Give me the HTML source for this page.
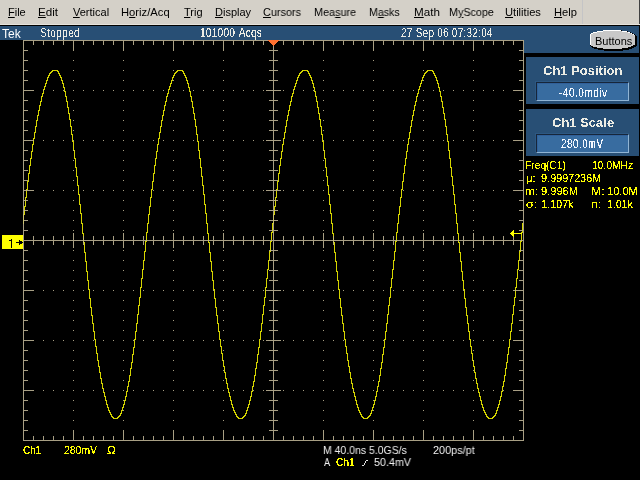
<!DOCTYPE html><html><head><meta charset="utf-8"><style>
html,body{margin:0;padding:0}
body{width:640px;height:480px;overflow:hidden;background:#000;position:relative;font-family:"Liberation Sans",sans-serif}
.a{position:absolute;white-space:nowrap}
.t{position:absolute;white-space:nowrap;line-height:20px;transform-origin:0 0;will-change:transform}
.f{filter:url(#th)}
.f2{filter:url(#th2)}
.t u{text-decoration:underline;text-decoration-thickness:1px;text-underline-offset:1px}
</style></head><body>
<svg width="0" height="0" style="position:absolute"><defs><filter id="th" x="-5%" y="0" width="110%" height="100%"><feComponentTransfer><feFuncA type="discrete" tableValues="0 0 0 1 1 1 1"/></feComponentTransfer></filter><filter id="th2" x="-5%" y="0" width="110%" height="100%"><feComponentTransfer><feFuncA type="discrete" tableValues="0 1"/></feComponentTransfer></filter></defs></svg>
<div class="a" style="left:0;top:0;width:640px;height:24px;background:#d4d0c8"></div>
<div class="a" style="left:582px;top:0;width:1px;height:24px;background:#c4c4c6"></div>
<div class="a" style="left:0;top:24px;width:640px;height:1px;background:#e6e3dc"></div>
<div class="a" style="left:0;top:25px;width:640px;height:1px;background:#000"></div>
<div class="a" style="left:639px;top:0;width:1px;height:24px;background:#404040"></div>
<div class="t" style="left:8.0px;top:2px;color:#000;font-size:11px;"><u>F</u>ile</div>
<div class="t" style="left:37.94px;top:2px;color:#000;font-size:11px;transform:scale(1.0588,1);"><u>E</u>dit</div>
<div class="t" style="left:72.5px;top:2px;color:#000;font-size:11px;"><u>V</u>ertical</div>
<div class="t" style="left:121.48px;top:2px;color:#000;font-size:11px;transform:scale(1.02,1);">H<u>o</u>riz/Acq</div>
<div class="t" style="left:184.0px;top:2px;color:#000;font-size:11px;"><u>T</u>rig</div>
<div class="t" style="left:215.0px;top:2px;color:#000;font-size:11px;"><u>D</u>isplay</div>
<div class="t" style="left:262.5px;top:2px;color:#000;font-size:11px;transform:scale(0.9865,1);"><u>C</u>ursors</div>
<div class="t" style="left:313.72px;top:2px;color:#000;font-size:11px;transform:scale(0.9829,1);">Mea<u>s</u>ure</div>
<div class="t" style="left:369.03px;top:2px;color:#000;font-size:11px;transform:scale(0.9667,1);">M<u>a</u>sks</div>
<div class="t" style="left:413.64px;top:2px;color:#000;font-size:11px;transform:scale(1.0591,1);"><u>M</u>ath</div>
<div class="t" style="left:449.02px;top:2px;color:#000;font-size:11px;transform:scale(0.9773,1);">M<u>y</u>Scope</div>
<div class="t" style="left:504.59px;top:2px;color:#000;font-size:11px;transform:scale(1.0121,1);"><u>U</u>tilities</div>
<div class="t" style="left:553.69px;top:2px;color:#000;font-size:11px;transform:scale(1.015,1);"><u>H</u>elp</div>
<div class="a" style="left:0;top:26px;width:639px;height:14px;background:#284f75"></div>
<div class="a" style="left:524px;top:40px;width:115px;height:13px;background:#284f75"></div>
<div class="t" style="left:2.0px;top:24px;color:#ffffff;font-size:12px;">Tek</div>
<div class="t f2" style="left:40.0px;top:21px;color:#ecece4;font-size:10px;letter-spacing:0.4px;word-spacing:2px;transform:scale(1.0,1.25);">Stopped</div>
<div class="t f" style="left:199.99px;top:21px;color:#ecece4;font-size:10px;letter-spacing:0.25px;word-spacing:1px;transform:scale(1.0085,1.25);">101000 Acqs</div>
<div class="t f2" style="left:401.0px;top:21px;color:#ecece4;font-size:10px;letter-spacing:0.25px;word-spacing:0px;transform:scale(0.9967,1.25);">27 Sep 06 07:32:04</div>
<svg class="a" style="left:0;top:0" width="640" height="60" shape-rendering="crispEdges"><g fill="#000"><rect x="603" y="30" width="19" height="1"/><rect x="597" y="31" width="31" height="1"/><rect x="593" y="32" width="38" height="1"/><rect x="591" y="33" width="42" height="1"/><rect x="590" y="34" width="45" height="1"/><rect x="590" y="35" width="46" height="1"/><rect x="590" y="36" width="47" height="1"/><rect x="590" y="37" width="47" height="1"/><rect x="590" y="38" width="47" height="1"/><rect x="590" y="39" width="47" height="1"/><rect x="590" y="40" width="47" height="1"/><rect x="590" y="41" width="47" height="1"/><rect x="590" y="42" width="47" height="1"/><rect x="590" y="43" width="47" height="1"/><rect x="590" y="44" width="47" height="1"/><rect x="590" y="45" width="47" height="1"/><rect x="591" y="46" width="45" height="1"/><rect x="592" y="47" width="42" height="1"/><rect x="594" y="48" width="38" height="1"/><rect x="598" y="49" width="31" height="1"/><rect x="604" y="50" width="19" height="1"/></g><g fill="#fff"><rect x="603" y="30" width="18" height="1"/><rect x="597" y="31" width="30" height="1"/><rect x="593" y="32" width="37" height="1"/><rect x="591" y="33" width="41" height="1"/><rect x="590" y="34" width="44" height="1"/><rect x="590" y="35" width="45" height="1"/><rect x="590" y="36" width="45" height="1"/><rect x="590" y="37" width="45" height="1"/><rect x="590" y="38" width="45" height="1"/><rect x="590" y="39" width="45" height="1"/><rect x="590" y="40" width="45" height="1"/><rect x="590" y="41" width="45" height="1"/><rect x="590" y="42" width="45" height="1"/><rect x="590" y="43" width="45" height="1"/><rect x="590" y="44" width="45" height="1"/><rect x="591" y="45" width="42" height="1"/><rect x="593" y="46" width="38" height="1"/><rect x="597" y="47" width="31" height="1"/><rect x="603" y="48" width="19" height="1"/></g><g fill="#c8c8c8"><rect x="603" y="31" width="19" height="1"/><rect x="597" y="32" width="31" height="1"/><rect x="593" y="33" width="38" height="1"/><rect x="591" y="34" width="42" height="1"/><rect x="591" y="35" width="44" height="1"/><rect x="591" y="36" width="44" height="1"/><rect x="591" y="37" width="44" height="1"/><rect x="591" y="38" width="44" height="1"/><rect x="591" y="39" width="44" height="1"/><rect x="591" y="40" width="44" height="1"/><rect x="591" y="41" width="44" height="1"/><rect x="591" y="42" width="44" height="1"/><rect x="591" y="43" width="44" height="1"/><rect x="591" y="44" width="44" height="1"/><rect x="591" y="45" width="42" height="1"/><rect x="593" y="46" width="38" height="1"/><rect x="597" y="47" width="31" height="1"/><rect x="603" y="48" width="19" height="1"/></g></svg>
<div class="t" style="left:594.7px;top:31px;color:#000;font-size:11px;">Buttons</div>
<div class="a" style="left:526px;top:57px;width:113px;height:47px;background:#284f75"></div>
<div class="a" style="left:535px;top:81px;width:94px;height:20px;background:#2d5883"></div>
<div class="a" style="left:536px;top:82px;width:93px;height:19px;background:#386ca0;box-sizing:border-box;border-left:1px solid #16263a;border-top:1px solid #16263a;border-right:1px solid #90b4d4;border-bottom:1px solid #90b4d4;box-shadow:inset 1px 1px 0 #30609a"></div>
<div class="t f2" style="left:542.9px;top:61px;color:#ecece4;font-size:13px;font-weight:bold;">Ch1 Position</div>
<div class="t f" style="left:559.0px;top:81px;color:#f4f8ff;font-size:10px;letter-spacing:0.5px;transform:scale(1.0043,1.2);">-40.0mdiv</div>
<div class="a" style="left:526px;top:109px;width:113px;height:47px;background:#284f75"></div>
<div class="a" style="left:535px;top:133px;width:94px;height:20px;background:#2d5883"></div>
<div class="a" style="left:536px;top:134px;width:93px;height:19px;background:#386ca0;box-sizing:border-box;border-left:1px solid #16263a;border-top:1px solid #16263a;border-right:1px solid #90b4d4;border-bottom:1px solid #90b4d4;box-shadow:inset 1px 1px 0 #30609a"></div>
<div class="t f2" style="left:551.5px;top:113px;color:#ecece4;font-size:13px;font-weight:bold;transform:scale(0.9967,1);">Ch1 Scale</div>
<div class="t f" style="left:561.3px;top:132px;color:#f4f8ff;font-size:10px;letter-spacing:0.5px;transform:scale(0.981,1.2);">280.0mV</div>
<div class="t f" style="left:525.17px;top:155px;color:#ffff00;font-size:11px;transform:scale(0.931,1);">Freq(C1)</div>
<div class="t f" style="left:591.87px;top:155px;color:#ffff00;font-size:11px;transform:scale(0.9333,1);">10.0MHz</div>
<div class="t f" style="left:525.76px;top:168px;color:#ffff00;font-size:11px;transform:scale(1.0429,1);">&mu;:</div>
<div class="t f" style="left:541.0px;top:168px;color:#ffff00;font-size:11px;transform:scale(0.9833,1);">9.9997236M</div>
<div class="t f" style="left:524.9px;top:181px;color:#ffff00;font-size:11px;transform:scale(1.1,1);">m:</div>
<div class="t f" style="left:541.0px;top:181px;color:#ffff00;font-size:11px;transform:scale(1.0086,1);">9.996M</div>
<div class="t f" style="left:590.99px;top:181px;color:#ffff00;font-size:11px;transform:scale(1.11,1);">M:</div>
<div class="t f" style="left:606.99px;top:181px;color:#ffff00;font-size:11px;transform:scale(1.0071,1);">10.0M</div>
<div class="t f" style="left:526.0px;top:194px;color:#ffff00;font-size:11px;transform:scale(1.125,1);">&sigma;:</div>
<div class="t f" style="left:540.82px;top:194px;color:#ffff00;font-size:11px;transform:scale(0.9806,1);">1.107k</div>
<div class="t f" style="left:590.78px;top:194px;color:#ffff00;font-size:11px;transform:scale(1.15,1);">n:</div>
<div class="t f" style="left:607.04px;top:194px;color:#ffff00;font-size:11px;transform:scale(0.96,1);">1.01k</div>
<svg class="a" style="left:0;top:0" width="640" height="480" shape-rendering="crispEdges"><rect x="23" y="40" width="501" height="1" fill="#a89f84"/><rect x="23" y="440" width="501" height="1" fill="#a89f84"/><rect x="23" y="40" width="1" height="401" fill="#a89f84"/><rect x="523" y="40" width="1" height="401" fill="#a89f84"/><rect x="23" y="240" width="500" height="1" fill="#a89f84"/><rect x="273" y="40" width="1" height="400" fill="#a89f84"/><rect x="33" y="41" width="1" height="4" fill="#a89f84"/><rect x="33" y="436" width="1" height="4" fill="#a89f84"/><rect x="43" y="41" width="1" height="4" fill="#a89f84"/><rect x="43" y="436" width="1" height="4" fill="#a89f84"/><rect x="53" y="41" width="1" height="4" fill="#a89f84"/><rect x="53" y="436" width="1" height="4" fill="#a89f84"/><rect x="63" y="41" width="1" height="4" fill="#a89f84"/><rect x="63" y="436" width="1" height="4" fill="#a89f84"/><rect x="73" y="41" width="1" height="10" fill="#a89f84"/><rect x="73" y="430" width="1" height="10" fill="#a89f84"/><rect x="83" y="41" width="1" height="4" fill="#a89f84"/><rect x="83" y="436" width="1" height="4" fill="#a89f84"/><rect x="93" y="41" width="1" height="4" fill="#a89f84"/><rect x="93" y="436" width="1" height="4" fill="#a89f84"/><rect x="103" y="41" width="1" height="4" fill="#a89f84"/><rect x="103" y="436" width="1" height="4" fill="#a89f84"/><rect x="113" y="41" width="1" height="4" fill="#a89f84"/><rect x="113" y="436" width="1" height="4" fill="#a89f84"/><rect x="123" y="41" width="1" height="10" fill="#a89f84"/><rect x="123" y="430" width="1" height="10" fill="#a89f84"/><rect x="133" y="41" width="1" height="4" fill="#a89f84"/><rect x="133" y="436" width="1" height="4" fill="#a89f84"/><rect x="143" y="41" width="1" height="4" fill="#a89f84"/><rect x="143" y="436" width="1" height="4" fill="#a89f84"/><rect x="153" y="41" width="1" height="4" fill="#a89f84"/><rect x="153" y="436" width="1" height="4" fill="#a89f84"/><rect x="163" y="41" width="1" height="4" fill="#a89f84"/><rect x="163" y="436" width="1" height="4" fill="#a89f84"/><rect x="173" y="41" width="1" height="10" fill="#a89f84"/><rect x="173" y="430" width="1" height="10" fill="#a89f84"/><rect x="183" y="41" width="1" height="4" fill="#a89f84"/><rect x="183" y="436" width="1" height="4" fill="#a89f84"/><rect x="193" y="41" width="1" height="4" fill="#a89f84"/><rect x="193" y="436" width="1" height="4" fill="#a89f84"/><rect x="203" y="41" width="1" height="4" fill="#a89f84"/><rect x="203" y="436" width="1" height="4" fill="#a89f84"/><rect x="213" y="41" width="1" height="4" fill="#a89f84"/><rect x="213" y="436" width="1" height="4" fill="#a89f84"/><rect x="223" y="41" width="1" height="10" fill="#a89f84"/><rect x="223" y="430" width="1" height="10" fill="#a89f84"/><rect x="233" y="41" width="1" height="4" fill="#a89f84"/><rect x="233" y="436" width="1" height="4" fill="#a89f84"/><rect x="243" y="41" width="1" height="4" fill="#a89f84"/><rect x="243" y="436" width="1" height="4" fill="#a89f84"/><rect x="253" y="41" width="1" height="4" fill="#a89f84"/><rect x="253" y="436" width="1" height="4" fill="#a89f84"/><rect x="263" y="41" width="1" height="4" fill="#a89f84"/><rect x="263" y="436" width="1" height="4" fill="#a89f84"/><rect x="273" y="41" width="1" height="10" fill="#a89f84"/><rect x="273" y="430" width="1" height="10" fill="#a89f84"/><rect x="283" y="41" width="1" height="4" fill="#a89f84"/><rect x="283" y="436" width="1" height="4" fill="#a89f84"/><rect x="293" y="41" width="1" height="4" fill="#a89f84"/><rect x="293" y="436" width="1" height="4" fill="#a89f84"/><rect x="303" y="41" width="1" height="4" fill="#a89f84"/><rect x="303" y="436" width="1" height="4" fill="#a89f84"/><rect x="313" y="41" width="1" height="4" fill="#a89f84"/><rect x="313" y="436" width="1" height="4" fill="#a89f84"/><rect x="323" y="41" width="1" height="10" fill="#a89f84"/><rect x="323" y="430" width="1" height="10" fill="#a89f84"/><rect x="333" y="41" width="1" height="4" fill="#a89f84"/><rect x="333" y="436" width="1" height="4" fill="#a89f84"/><rect x="343" y="41" width="1" height="4" fill="#a89f84"/><rect x="343" y="436" width="1" height="4" fill="#a89f84"/><rect x="353" y="41" width="1" height="4" fill="#a89f84"/><rect x="353" y="436" width="1" height="4" fill="#a89f84"/><rect x="363" y="41" width="1" height="4" fill="#a89f84"/><rect x="363" y="436" width="1" height="4" fill="#a89f84"/><rect x="373" y="41" width="1" height="10" fill="#a89f84"/><rect x="373" y="430" width="1" height="10" fill="#a89f84"/><rect x="383" y="41" width="1" height="4" fill="#a89f84"/><rect x="383" y="436" width="1" height="4" fill="#a89f84"/><rect x="393" y="41" width="1" height="4" fill="#a89f84"/><rect x="393" y="436" width="1" height="4" fill="#a89f84"/><rect x="403" y="41" width="1" height="4" fill="#a89f84"/><rect x="403" y="436" width="1" height="4" fill="#a89f84"/><rect x="413" y="41" width="1" height="4" fill="#a89f84"/><rect x="413" y="436" width="1" height="4" fill="#a89f84"/><rect x="423" y="41" width="1" height="10" fill="#a89f84"/><rect x="423" y="430" width="1" height="10" fill="#a89f84"/><rect x="433" y="41" width="1" height="4" fill="#a89f84"/><rect x="433" y="436" width="1" height="4" fill="#a89f84"/><rect x="443" y="41" width="1" height="4" fill="#a89f84"/><rect x="443" y="436" width="1" height="4" fill="#a89f84"/><rect x="453" y="41" width="1" height="4" fill="#a89f84"/><rect x="453" y="436" width="1" height="4" fill="#a89f84"/><rect x="463" y="41" width="1" height="4" fill="#a89f84"/><rect x="463" y="436" width="1" height="4" fill="#a89f84"/><rect x="473" y="41" width="1" height="10" fill="#a89f84"/><rect x="473" y="430" width="1" height="10" fill="#a89f84"/><rect x="483" y="41" width="1" height="4" fill="#a89f84"/><rect x="483" y="436" width="1" height="4" fill="#a89f84"/><rect x="493" y="41" width="1" height="4" fill="#a89f84"/><rect x="493" y="436" width="1" height="4" fill="#a89f84"/><rect x="503" y="41" width="1" height="4" fill="#a89f84"/><rect x="503" y="436" width="1" height="4" fill="#a89f84"/><rect x="513" y="41" width="1" height="4" fill="#a89f84"/><rect x="513" y="436" width="1" height="4" fill="#a89f84"/><rect x="24" y="50" width="4" height="1" fill="#a89f84"/><rect x="519" y="50" width="4" height="1" fill="#a89f84"/><rect x="24" y="60" width="4" height="1" fill="#a89f84"/><rect x="519" y="60" width="4" height="1" fill="#a89f84"/><rect x="24" y="70" width="4" height="1" fill="#a89f84"/><rect x="519" y="70" width="4" height="1" fill="#a89f84"/><rect x="24" y="80" width="4" height="1" fill="#a89f84"/><rect x="519" y="80" width="4" height="1" fill="#a89f84"/><rect x="24" y="90" width="10" height="1" fill="#a89f84"/><rect x="513" y="90" width="10" height="1" fill="#a89f84"/><rect x="24" y="100" width="4" height="1" fill="#a89f84"/><rect x="519" y="100" width="4" height="1" fill="#a89f84"/><rect x="24" y="110" width="4" height="1" fill="#a89f84"/><rect x="519" y="110" width="4" height="1" fill="#a89f84"/><rect x="24" y="120" width="4" height="1" fill="#a89f84"/><rect x="519" y="120" width="4" height="1" fill="#a89f84"/><rect x="24" y="130" width="4" height="1" fill="#a89f84"/><rect x="519" y="130" width="4" height="1" fill="#a89f84"/><rect x="24" y="140" width="10" height="1" fill="#a89f84"/><rect x="513" y="140" width="10" height="1" fill="#a89f84"/><rect x="24" y="150" width="4" height="1" fill="#a89f84"/><rect x="519" y="150" width="4" height="1" fill="#a89f84"/><rect x="24" y="160" width="4" height="1" fill="#a89f84"/><rect x="519" y="160" width="4" height="1" fill="#a89f84"/><rect x="24" y="170" width="4" height="1" fill="#a89f84"/><rect x="519" y="170" width="4" height="1" fill="#a89f84"/><rect x="24" y="180" width="4" height="1" fill="#a89f84"/><rect x="519" y="180" width="4" height="1" fill="#a89f84"/><rect x="24" y="190" width="10" height="1" fill="#a89f84"/><rect x="513" y="190" width="10" height="1" fill="#a89f84"/><rect x="24" y="200" width="4" height="1" fill="#a89f84"/><rect x="519" y="200" width="4" height="1" fill="#a89f84"/><rect x="24" y="210" width="4" height="1" fill="#a89f84"/><rect x="519" y="210" width="4" height="1" fill="#a89f84"/><rect x="24" y="220" width="4" height="1" fill="#a89f84"/><rect x="519" y="220" width="4" height="1" fill="#a89f84"/><rect x="24" y="230" width="4" height="1" fill="#a89f84"/><rect x="519" y="230" width="4" height="1" fill="#a89f84"/><rect x="24" y="240" width="10" height="1" fill="#a89f84"/><rect x="513" y="240" width="10" height="1" fill="#a89f84"/><rect x="24" y="250" width="4" height="1" fill="#a89f84"/><rect x="519" y="250" width="4" height="1" fill="#a89f84"/><rect x="24" y="260" width="4" height="1" fill="#a89f84"/><rect x="519" y="260" width="4" height="1" fill="#a89f84"/><rect x="24" y="270" width="4" height="1" fill="#a89f84"/><rect x="519" y="270" width="4" height="1" fill="#a89f84"/><rect x="24" y="280" width="4" height="1" fill="#a89f84"/><rect x="519" y="280" width="4" height="1" fill="#a89f84"/><rect x="24" y="290" width="10" height="1" fill="#a89f84"/><rect x="513" y="290" width="10" height="1" fill="#a89f84"/><rect x="24" y="300" width="4" height="1" fill="#a89f84"/><rect x="519" y="300" width="4" height="1" fill="#a89f84"/><rect x="24" y="310" width="4" height="1" fill="#a89f84"/><rect x="519" y="310" width="4" height="1" fill="#a89f84"/><rect x="24" y="320" width="4" height="1" fill="#a89f84"/><rect x="519" y="320" width="4" height="1" fill="#a89f84"/><rect x="24" y="330" width="4" height="1" fill="#a89f84"/><rect x="519" y="330" width="4" height="1" fill="#a89f84"/><rect x="24" y="340" width="10" height="1" fill="#a89f84"/><rect x="513" y="340" width="10" height="1" fill="#a89f84"/><rect x="24" y="350" width="4" height="1" fill="#a89f84"/><rect x="519" y="350" width="4" height="1" fill="#a89f84"/><rect x="24" y="360" width="4" height="1" fill="#a89f84"/><rect x="519" y="360" width="4" height="1" fill="#a89f84"/><rect x="24" y="370" width="4" height="1" fill="#a89f84"/><rect x="519" y="370" width="4" height="1" fill="#a89f84"/><rect x="24" y="380" width="4" height="1" fill="#a89f84"/><rect x="519" y="380" width="4" height="1" fill="#a89f84"/><rect x="24" y="390" width="10" height="1" fill="#a89f84"/><rect x="513" y="390" width="10" height="1" fill="#a89f84"/><rect x="24" y="400" width="4" height="1" fill="#a89f84"/><rect x="519" y="400" width="4" height="1" fill="#a89f84"/><rect x="24" y="410" width="4" height="1" fill="#a89f84"/><rect x="519" y="410" width="4" height="1" fill="#a89f84"/><rect x="24" y="420" width="4" height="1" fill="#a89f84"/><rect x="519" y="420" width="4" height="1" fill="#a89f84"/><rect x="24" y="430" width="4" height="1" fill="#a89f84"/><rect x="519" y="430" width="4" height="1" fill="#a89f84"/><rect x="33" y="236" width="1" height="9" fill="#a89f84"/><rect x="43" y="236" width="1" height="9" fill="#a89f84"/><rect x="53" y="236" width="1" height="9" fill="#a89f84"/><rect x="63" y="236" width="1" height="9" fill="#a89f84"/><rect x="73" y="233" width="1" height="15" fill="#a89f84"/><rect x="83" y="236" width="1" height="9" fill="#a89f84"/><rect x="93" y="236" width="1" height="9" fill="#a89f84"/><rect x="103" y="236" width="1" height="9" fill="#a89f84"/><rect x="113" y="236" width="1" height="9" fill="#a89f84"/><rect x="123" y="233" width="1" height="15" fill="#a89f84"/><rect x="133" y="236" width="1" height="9" fill="#a89f84"/><rect x="143" y="236" width="1" height="9" fill="#a89f84"/><rect x="153" y="236" width="1" height="9" fill="#a89f84"/><rect x="163" y="236" width="1" height="9" fill="#a89f84"/><rect x="173" y="233" width="1" height="15" fill="#a89f84"/><rect x="183" y="236" width="1" height="9" fill="#a89f84"/><rect x="193" y="236" width="1" height="9" fill="#a89f84"/><rect x="203" y="236" width="1" height="9" fill="#a89f84"/><rect x="213" y="236" width="1" height="9" fill="#a89f84"/><rect x="223" y="233" width="1" height="15" fill="#a89f84"/><rect x="233" y="236" width="1" height="9" fill="#a89f84"/><rect x="243" y="236" width="1" height="9" fill="#a89f84"/><rect x="253" y="236" width="1" height="9" fill="#a89f84"/><rect x="263" y="236" width="1" height="9" fill="#a89f84"/><rect x="283" y="236" width="1" height="9" fill="#a89f84"/><rect x="293" y="236" width="1" height="9" fill="#a89f84"/><rect x="303" y="236" width="1" height="9" fill="#a89f84"/><rect x="313" y="236" width="1" height="9" fill="#a89f84"/><rect x="323" y="233" width="1" height="15" fill="#a89f84"/><rect x="333" y="236" width="1" height="9" fill="#a89f84"/><rect x="343" y="236" width="1" height="9" fill="#a89f84"/><rect x="353" y="236" width="1" height="9" fill="#a89f84"/><rect x="363" y="236" width="1" height="9" fill="#a89f84"/><rect x="373" y="233" width="1" height="15" fill="#a89f84"/><rect x="383" y="236" width="1" height="9" fill="#a89f84"/><rect x="393" y="236" width="1" height="9" fill="#a89f84"/><rect x="403" y="236" width="1" height="9" fill="#a89f84"/><rect x="413" y="236" width="1" height="9" fill="#a89f84"/><rect x="423" y="233" width="1" height="15" fill="#a89f84"/><rect x="433" y="236" width="1" height="9" fill="#a89f84"/><rect x="443" y="236" width="1" height="9" fill="#a89f84"/><rect x="453" y="236" width="1" height="9" fill="#a89f84"/><rect x="463" y="236" width="1" height="9" fill="#a89f84"/><rect x="473" y="233" width="1" height="15" fill="#a89f84"/><rect x="483" y="236" width="1" height="9" fill="#a89f84"/><rect x="493" y="236" width="1" height="9" fill="#a89f84"/><rect x="503" y="236" width="1" height="9" fill="#a89f84"/><rect x="513" y="236" width="1" height="9" fill="#a89f84"/><rect x="269" y="50" width="9" height="1" fill="#a89f84"/><rect x="269" y="60" width="9" height="1" fill="#a89f84"/><rect x="269" y="70" width="9" height="1" fill="#a89f84"/><rect x="269" y="80" width="9" height="1" fill="#a89f84"/><rect x="266" y="90" width="15" height="1" fill="#a89f84"/><rect x="269" y="100" width="9" height="1" fill="#a89f84"/><rect x="269" y="110" width="9" height="1" fill="#a89f84"/><rect x="269" y="120" width="9" height="1" fill="#a89f84"/><rect x="269" y="130" width="9" height="1" fill="#a89f84"/><rect x="266" y="140" width="15" height="1" fill="#a89f84"/><rect x="269" y="150" width="9" height="1" fill="#a89f84"/><rect x="269" y="160" width="9" height="1" fill="#a89f84"/><rect x="269" y="170" width="9" height="1" fill="#a89f84"/><rect x="269" y="180" width="9" height="1" fill="#a89f84"/><rect x="266" y="190" width="15" height="1" fill="#a89f84"/><rect x="269" y="200" width="9" height="1" fill="#a89f84"/><rect x="269" y="210" width="9" height="1" fill="#a89f84"/><rect x="269" y="220" width="9" height="1" fill="#a89f84"/><rect x="269" y="230" width="9" height="1" fill="#a89f84"/><rect x="269" y="250" width="9" height="1" fill="#a89f84"/><rect x="269" y="260" width="9" height="1" fill="#a89f84"/><rect x="269" y="270" width="9" height="1" fill="#a89f84"/><rect x="269" y="280" width="9" height="1" fill="#a89f84"/><rect x="266" y="290" width="15" height="1" fill="#a89f84"/><rect x="269" y="300" width="9" height="1" fill="#a89f84"/><rect x="269" y="310" width="9" height="1" fill="#a89f84"/><rect x="269" y="320" width="9" height="1" fill="#a89f84"/><rect x="269" y="330" width="9" height="1" fill="#a89f84"/><rect x="266" y="340" width="15" height="1" fill="#a89f84"/><rect x="269" y="350" width="9" height="1" fill="#a89f84"/><rect x="269" y="360" width="9" height="1" fill="#a89f84"/><rect x="269" y="370" width="9" height="1" fill="#a89f84"/><rect x="269" y="380" width="9" height="1" fill="#a89f84"/><rect x="266" y="390" width="15" height="1" fill="#a89f84"/><rect x="269" y="400" width="9" height="1" fill="#a89f84"/><rect x="269" y="410" width="9" height="1" fill="#a89f84"/><rect x="269" y="420" width="9" height="1" fill="#a89f84"/><rect x="269" y="430" width="9" height="1" fill="#a89f84"/><rect x="73" y="50" width="1" height="1" fill="#a89f84"/><rect x="73" y="60" width="1" height="1" fill="#a89f84"/><rect x="73" y="70" width="1" height="1" fill="#a89f84"/><rect x="73" y="80" width="1" height="1" fill="#a89f84"/><rect x="73" y="90" width="1" height="1" fill="#a89f84"/><rect x="73" y="100" width="1" height="1" fill="#a89f84"/><rect x="73" y="110" width="1" height="1" fill="#a89f84"/><rect x="73" y="120" width="1" height="1" fill="#a89f84"/><rect x="73" y="130" width="1" height="1" fill="#a89f84"/><rect x="73" y="140" width="1" height="1" fill="#a89f84"/><rect x="73" y="150" width="1" height="1" fill="#a89f84"/><rect x="73" y="160" width="1" height="1" fill="#a89f84"/><rect x="73" y="170" width="1" height="1" fill="#a89f84"/><rect x="73" y="180" width="1" height="1" fill="#a89f84"/><rect x="73" y="190" width="1" height="1" fill="#a89f84"/><rect x="73" y="200" width="1" height="1" fill="#a89f84"/><rect x="73" y="210" width="1" height="1" fill="#a89f84"/><rect x="73" y="220" width="1" height="1" fill="#a89f84"/><rect x="73" y="230" width="1" height="1" fill="#a89f84"/><rect x="73" y="240" width="1" height="1" fill="#a89f84"/><rect x="73" y="250" width="1" height="1" fill="#a89f84"/><rect x="73" y="260" width="1" height="1" fill="#a89f84"/><rect x="73" y="270" width="1" height="1" fill="#a89f84"/><rect x="73" y="280" width="1" height="1" fill="#a89f84"/><rect x="73" y="290" width="1" height="1" fill="#a89f84"/><rect x="73" y="300" width="1" height="1" fill="#a89f84"/><rect x="73" y="310" width="1" height="1" fill="#a89f84"/><rect x="73" y="320" width="1" height="1" fill="#a89f84"/><rect x="73" y="330" width="1" height="1" fill="#a89f84"/><rect x="73" y="340" width="1" height="1" fill="#a89f84"/><rect x="73" y="350" width="1" height="1" fill="#a89f84"/><rect x="73" y="360" width="1" height="1" fill="#a89f84"/><rect x="73" y="370" width="1" height="1" fill="#a89f84"/><rect x="73" y="380" width="1" height="1" fill="#a89f84"/><rect x="73" y="390" width="1" height="1" fill="#a89f84"/><rect x="73" y="400" width="1" height="1" fill="#a89f84"/><rect x="73" y="410" width="1" height="1" fill="#a89f84"/><rect x="73" y="420" width="1" height="1" fill="#a89f84"/><rect x="73" y="430" width="1" height="1" fill="#a89f84"/><rect x="123" y="50" width="1" height="1" fill="#a89f84"/><rect x="123" y="60" width="1" height="1" fill="#a89f84"/><rect x="123" y="70" width="1" height="1" fill="#a89f84"/><rect x="123" y="80" width="1" height="1" fill="#a89f84"/><rect x="123" y="90" width="1" height="1" fill="#a89f84"/><rect x="123" y="100" width="1" height="1" fill="#a89f84"/><rect x="123" y="110" width="1" height="1" fill="#a89f84"/><rect x="123" y="120" width="1" height="1" fill="#a89f84"/><rect x="123" y="130" width="1" height="1" fill="#a89f84"/><rect x="123" y="140" width="1" height="1" fill="#a89f84"/><rect x="123" y="150" width="1" height="1" fill="#a89f84"/><rect x="123" y="160" width="1" height="1" fill="#a89f84"/><rect x="123" y="170" width="1" height="1" fill="#a89f84"/><rect x="123" y="180" width="1" height="1" fill="#a89f84"/><rect x="123" y="190" width="1" height="1" fill="#a89f84"/><rect x="123" y="200" width="1" height="1" fill="#a89f84"/><rect x="123" y="210" width="1" height="1" fill="#a89f84"/><rect x="123" y="220" width="1" height="1" fill="#a89f84"/><rect x="123" y="230" width="1" height="1" fill="#a89f84"/><rect x="123" y="240" width="1" height="1" fill="#a89f84"/><rect x="123" y="250" width="1" height="1" fill="#a89f84"/><rect x="123" y="260" width="1" height="1" fill="#a89f84"/><rect x="123" y="270" width="1" height="1" fill="#a89f84"/><rect x="123" y="280" width="1" height="1" fill="#a89f84"/><rect x="123" y="290" width="1" height="1" fill="#a89f84"/><rect x="123" y="300" width="1" height="1" fill="#a89f84"/><rect x="123" y="310" width="1" height="1" fill="#a89f84"/><rect x="123" y="320" width="1" height="1" fill="#a89f84"/><rect x="123" y="330" width="1" height="1" fill="#a89f84"/><rect x="123" y="340" width="1" height="1" fill="#a89f84"/><rect x="123" y="350" width="1" height="1" fill="#a89f84"/><rect x="123" y="360" width="1" height="1" fill="#a89f84"/><rect x="123" y="370" width="1" height="1" fill="#a89f84"/><rect x="123" y="380" width="1" height="1" fill="#a89f84"/><rect x="123" y="390" width="1" height="1" fill="#a89f84"/><rect x="123" y="400" width="1" height="1" fill="#a89f84"/><rect x="123" y="410" width="1" height="1" fill="#a89f84"/><rect x="123" y="420" width="1" height="1" fill="#a89f84"/><rect x="123" y="430" width="1" height="1" fill="#a89f84"/><rect x="173" y="50" width="1" height="1" fill="#a89f84"/><rect x="173" y="60" width="1" height="1" fill="#a89f84"/><rect x="173" y="70" width="1" height="1" fill="#a89f84"/><rect x="173" y="80" width="1" height="1" fill="#a89f84"/><rect x="173" y="90" width="1" height="1" fill="#a89f84"/><rect x="173" y="100" width="1" height="1" fill="#a89f84"/><rect x="173" y="110" width="1" height="1" fill="#a89f84"/><rect x="173" y="120" width="1" height="1" fill="#a89f84"/><rect x="173" y="130" width="1" height="1" fill="#a89f84"/><rect x="173" y="140" width="1" height="1" fill="#a89f84"/><rect x="173" y="150" width="1" height="1" fill="#a89f84"/><rect x="173" y="160" width="1" height="1" fill="#a89f84"/><rect x="173" y="170" width="1" height="1" fill="#a89f84"/><rect x="173" y="180" width="1" height="1" fill="#a89f84"/><rect x="173" y="190" width="1" height="1" fill="#a89f84"/><rect x="173" y="200" width="1" height="1" fill="#a89f84"/><rect x="173" y="210" width="1" height="1" fill="#a89f84"/><rect x="173" y="220" width="1" height="1" fill="#a89f84"/><rect x="173" y="230" width="1" height="1" fill="#a89f84"/><rect x="173" y="240" width="1" height="1" fill="#a89f84"/><rect x="173" y="250" width="1" height="1" fill="#a89f84"/><rect x="173" y="260" width="1" height="1" fill="#a89f84"/><rect x="173" y="270" width="1" height="1" fill="#a89f84"/><rect x="173" y="280" width="1" height="1" fill="#a89f84"/><rect x="173" y="290" width="1" height="1" fill="#a89f84"/><rect x="173" y="300" width="1" height="1" fill="#a89f84"/><rect x="173" y="310" width="1" height="1" fill="#a89f84"/><rect x="173" y="320" width="1" height="1" fill="#a89f84"/><rect x="173" y="330" width="1" height="1" fill="#a89f84"/><rect x="173" y="340" width="1" height="1" fill="#a89f84"/><rect x="173" y="350" width="1" height="1" fill="#a89f84"/><rect x="173" y="360" width="1" height="1" fill="#a89f84"/><rect x="173" y="370" width="1" height="1" fill="#a89f84"/><rect x="173" y="380" width="1" height="1" fill="#a89f84"/><rect x="173" y="390" width="1" height="1" fill="#a89f84"/><rect x="173" y="400" width="1" height="1" fill="#a89f84"/><rect x="173" y="410" width="1" height="1" fill="#a89f84"/><rect x="173" y="420" width="1" height="1" fill="#a89f84"/><rect x="173" y="430" width="1" height="1" fill="#a89f84"/><rect x="223" y="50" width="1" height="1" fill="#a89f84"/><rect x="223" y="60" width="1" height="1" fill="#a89f84"/><rect x="223" y="70" width="1" height="1" fill="#a89f84"/><rect x="223" y="80" width="1" height="1" fill="#a89f84"/><rect x="223" y="90" width="1" height="1" fill="#a89f84"/><rect x="223" y="100" width="1" height="1" fill="#a89f84"/><rect x="223" y="110" width="1" height="1" fill="#a89f84"/><rect x="223" y="120" width="1" height="1" fill="#a89f84"/><rect x="223" y="130" width="1" height="1" fill="#a89f84"/><rect x="223" y="140" width="1" height="1" fill="#a89f84"/><rect x="223" y="150" width="1" height="1" fill="#a89f84"/><rect x="223" y="160" width="1" height="1" fill="#a89f84"/><rect x="223" y="170" width="1" height="1" fill="#a89f84"/><rect x="223" y="180" width="1" height="1" fill="#a89f84"/><rect x="223" y="190" width="1" height="1" fill="#a89f84"/><rect x="223" y="200" width="1" height="1" fill="#a89f84"/><rect x="223" y="210" width="1" height="1" fill="#a89f84"/><rect x="223" y="220" width="1" height="1" fill="#a89f84"/><rect x="223" y="230" width="1" height="1" fill="#a89f84"/><rect x="223" y="240" width="1" height="1" fill="#a89f84"/><rect x="223" y="250" width="1" height="1" fill="#a89f84"/><rect x="223" y="260" width="1" height="1" fill="#a89f84"/><rect x="223" y="270" width="1" height="1" fill="#a89f84"/><rect x="223" y="280" width="1" height="1" fill="#a89f84"/><rect x="223" y="290" width="1" height="1" fill="#a89f84"/><rect x="223" y="300" width="1" height="1" fill="#a89f84"/><rect x="223" y="310" width="1" height="1" fill="#a89f84"/><rect x="223" y="320" width="1" height="1" fill="#a89f84"/><rect x="223" y="330" width="1" height="1" fill="#a89f84"/><rect x="223" y="340" width="1" height="1" fill="#a89f84"/><rect x="223" y="350" width="1" height="1" fill="#a89f84"/><rect x="223" y="360" width="1" height="1" fill="#a89f84"/><rect x="223" y="370" width="1" height="1" fill="#a89f84"/><rect x="223" y="380" width="1" height="1" fill="#a89f84"/><rect x="223" y="390" width="1" height="1" fill="#a89f84"/><rect x="223" y="400" width="1" height="1" fill="#a89f84"/><rect x="223" y="410" width="1" height="1" fill="#a89f84"/><rect x="223" y="420" width="1" height="1" fill="#a89f84"/><rect x="223" y="430" width="1" height="1" fill="#a89f84"/><rect x="323" y="50" width="1" height="1" fill="#a89f84"/><rect x="323" y="60" width="1" height="1" fill="#a89f84"/><rect x="323" y="70" width="1" height="1" fill="#a89f84"/><rect x="323" y="80" width="1" height="1" fill="#a89f84"/><rect x="323" y="90" width="1" height="1" fill="#a89f84"/><rect x="323" y="100" width="1" height="1" fill="#a89f84"/><rect x="323" y="110" width="1" height="1" fill="#a89f84"/><rect x="323" y="120" width="1" height="1" fill="#a89f84"/><rect x="323" y="130" width="1" height="1" fill="#a89f84"/><rect x="323" y="140" width="1" height="1" fill="#a89f84"/><rect x="323" y="150" width="1" height="1" fill="#a89f84"/><rect x="323" y="160" width="1" height="1" fill="#a89f84"/><rect x="323" y="170" width="1" height="1" fill="#a89f84"/><rect x="323" y="180" width="1" height="1" fill="#a89f84"/><rect x="323" y="190" width="1" height="1" fill="#a89f84"/><rect x="323" y="200" width="1" height="1" fill="#a89f84"/><rect x="323" y="210" width="1" height="1" fill="#a89f84"/><rect x="323" y="220" width="1" height="1" fill="#a89f84"/><rect x="323" y="230" width="1" height="1" fill="#a89f84"/><rect x="323" y="240" width="1" height="1" fill="#a89f84"/><rect x="323" y="250" width="1" height="1" fill="#a89f84"/><rect x="323" y="260" width="1" height="1" fill="#a89f84"/><rect x="323" y="270" width="1" height="1" fill="#a89f84"/><rect x="323" y="280" width="1" height="1" fill="#a89f84"/><rect x="323" y="290" width="1" height="1" fill="#a89f84"/><rect x="323" y="300" width="1" height="1" fill="#a89f84"/><rect x="323" y="310" width="1" height="1" fill="#a89f84"/><rect x="323" y="320" width="1" height="1" fill="#a89f84"/><rect x="323" y="330" width="1" height="1" fill="#a89f84"/><rect x="323" y="340" width="1" height="1" fill="#a89f84"/><rect x="323" y="350" width="1" height="1" fill="#a89f84"/><rect x="323" y="360" width="1" height="1" fill="#a89f84"/><rect x="323" y="370" width="1" height="1" fill="#a89f84"/><rect x="323" y="380" width="1" height="1" fill="#a89f84"/><rect x="323" y="390" width="1" height="1" fill="#a89f84"/><rect x="323" y="400" width="1" height="1" fill="#a89f84"/><rect x="323" y="410" width="1" height="1" fill="#a89f84"/><rect x="323" y="420" width="1" height="1" fill="#a89f84"/><rect x="323" y="430" width="1" height="1" fill="#a89f84"/><rect x="373" y="50" width="1" height="1" fill="#a89f84"/><rect x="373" y="60" width="1" height="1" fill="#a89f84"/><rect x="373" y="70" width="1" height="1" fill="#a89f84"/><rect x="373" y="80" width="1" height="1" fill="#a89f84"/><rect x="373" y="90" width="1" height="1" fill="#a89f84"/><rect x="373" y="100" width="1" height="1" fill="#a89f84"/><rect x="373" y="110" width="1" height="1" fill="#a89f84"/><rect x="373" y="120" width="1" height="1" fill="#a89f84"/><rect x="373" y="130" width="1" height="1" fill="#a89f84"/><rect x="373" y="140" width="1" height="1" fill="#a89f84"/><rect x="373" y="150" width="1" height="1" fill="#a89f84"/><rect x="373" y="160" width="1" height="1" fill="#a89f84"/><rect x="373" y="170" width="1" height="1" fill="#a89f84"/><rect x="373" y="180" width="1" height="1" fill="#a89f84"/><rect x="373" y="190" width="1" height="1" fill="#a89f84"/><rect x="373" y="200" width="1" height="1" fill="#a89f84"/><rect x="373" y="210" width="1" height="1" fill="#a89f84"/><rect x="373" y="220" width="1" height="1" fill="#a89f84"/><rect x="373" y="230" width="1" height="1" fill="#a89f84"/><rect x="373" y="240" width="1" height="1" fill="#a89f84"/><rect x="373" y="250" width="1" height="1" fill="#a89f84"/><rect x="373" y="260" width="1" height="1" fill="#a89f84"/><rect x="373" y="270" width="1" height="1" fill="#a89f84"/><rect x="373" y="280" width="1" height="1" fill="#a89f84"/><rect x="373" y="290" width="1" height="1" fill="#a89f84"/><rect x="373" y="300" width="1" height="1" fill="#a89f84"/><rect x="373" y="310" width="1" height="1" fill="#a89f84"/><rect x="373" y="320" width="1" height="1" fill="#a89f84"/><rect x="373" y="330" width="1" height="1" fill="#a89f84"/><rect x="373" y="340" width="1" height="1" fill="#a89f84"/><rect x="373" y="350" width="1" height="1" fill="#a89f84"/><rect x="373" y="360" width="1" height="1" fill="#a89f84"/><rect x="373" y="370" width="1" height="1" fill="#a89f84"/><rect x="373" y="380" width="1" height="1" fill="#a89f84"/><rect x="373" y="390" width="1" height="1" fill="#a89f84"/><rect x="373" y="400" width="1" height="1" fill="#a89f84"/><rect x="373" y="410" width="1" height="1" fill="#a89f84"/><rect x="373" y="420" width="1" height="1" fill="#a89f84"/><rect x="373" y="430" width="1" height="1" fill="#a89f84"/><rect x="423" y="50" width="1" height="1" fill="#a89f84"/><rect x="423" y="60" width="1" height="1" fill="#a89f84"/><rect x="423" y="70" width="1" height="1" fill="#a89f84"/><rect x="423" y="80" width="1" height="1" fill="#a89f84"/><rect x="423" y="90" width="1" height="1" fill="#a89f84"/><rect x="423" y="100" width="1" height="1" fill="#a89f84"/><rect x="423" y="110" width="1" height="1" fill="#a89f84"/><rect x="423" y="120" width="1" height="1" fill="#a89f84"/><rect x="423" y="130" width="1" height="1" fill="#a89f84"/><rect x="423" y="140" width="1" height="1" fill="#a89f84"/><rect x="423" y="150" width="1" height="1" fill="#a89f84"/><rect x="423" y="160" width="1" height="1" fill="#a89f84"/><rect x="423" y="170" width="1" height="1" fill="#a89f84"/><rect x="423" y="180" width="1" height="1" fill="#a89f84"/><rect x="423" y="190" width="1" height="1" fill="#a89f84"/><rect x="423" y="200" width="1" height="1" fill="#a89f84"/><rect x="423" y="210" width="1" height="1" fill="#a89f84"/><rect x="423" y="220" width="1" height="1" fill="#a89f84"/><rect x="423" y="230" width="1" height="1" fill="#a89f84"/><rect x="423" y="240" width="1" height="1" fill="#a89f84"/><rect x="423" y="250" width="1" height="1" fill="#a89f84"/><rect x="423" y="260" width="1" height="1" fill="#a89f84"/><rect x="423" y="270" width="1" height="1" fill="#a89f84"/><rect x="423" y="280" width="1" height="1" fill="#a89f84"/><rect x="423" y="290" width="1" height="1" fill="#a89f84"/><rect x="423" y="300" width="1" height="1" fill="#a89f84"/><rect x="423" y="310" width="1" height="1" fill="#a89f84"/><rect x="423" y="320" width="1" height="1" fill="#a89f84"/><rect x="423" y="330" width="1" height="1" fill="#a89f84"/><rect x="423" y="340" width="1" height="1" fill="#a89f84"/><rect x="423" y="350" width="1" height="1" fill="#a89f84"/><rect x="423" y="360" width="1" height="1" fill="#a89f84"/><rect x="423" y="370" width="1" height="1" fill="#a89f84"/><rect x="423" y="380" width="1" height="1" fill="#a89f84"/><rect x="423" y="390" width="1" height="1" fill="#a89f84"/><rect x="423" y="400" width="1" height="1" fill="#a89f84"/><rect x="423" y="410" width="1" height="1" fill="#a89f84"/><rect x="423" y="420" width="1" height="1" fill="#a89f84"/><rect x="423" y="430" width="1" height="1" fill="#a89f84"/><rect x="473" y="50" width="1" height="1" fill="#a89f84"/><rect x="473" y="60" width="1" height="1" fill="#a89f84"/><rect x="473" y="70" width="1" height="1" fill="#a89f84"/><rect x="473" y="80" width="1" height="1" fill="#a89f84"/><rect x="473" y="90" width="1" height="1" fill="#a89f84"/><rect x="473" y="100" width="1" height="1" fill="#a89f84"/><rect x="473" y="110" width="1" height="1" fill="#a89f84"/><rect x="473" y="120" width="1" height="1" fill="#a89f84"/><rect x="473" y="130" width="1" height="1" fill="#a89f84"/><rect x="473" y="140" width="1" height="1" fill="#a89f84"/><rect x="473" y="150" width="1" height="1" fill="#a89f84"/><rect x="473" y="160" width="1" height="1" fill="#a89f84"/><rect x="473" y="170" width="1" height="1" fill="#a89f84"/><rect x="473" y="180" width="1" height="1" fill="#a89f84"/><rect x="473" y="190" width="1" height="1" fill="#a89f84"/><rect x="473" y="200" width="1" height="1" fill="#a89f84"/><rect x="473" y="210" width="1" height="1" fill="#a89f84"/><rect x="473" y="220" width="1" height="1" fill="#a89f84"/><rect x="473" y="230" width="1" height="1" fill="#a89f84"/><rect x="473" y="240" width="1" height="1" fill="#a89f84"/><rect x="473" y="250" width="1" height="1" fill="#a89f84"/><rect x="473" y="260" width="1" height="1" fill="#a89f84"/><rect x="473" y="270" width="1" height="1" fill="#a89f84"/><rect x="473" y="280" width="1" height="1" fill="#a89f84"/><rect x="473" y="290" width="1" height="1" fill="#a89f84"/><rect x="473" y="300" width="1" height="1" fill="#a89f84"/><rect x="473" y="310" width="1" height="1" fill="#a89f84"/><rect x="473" y="320" width="1" height="1" fill="#a89f84"/><rect x="473" y="330" width="1" height="1" fill="#a89f84"/><rect x="473" y="340" width="1" height="1" fill="#a89f84"/><rect x="473" y="350" width="1" height="1" fill="#a89f84"/><rect x="473" y="360" width="1" height="1" fill="#a89f84"/><rect x="473" y="370" width="1" height="1" fill="#a89f84"/><rect x="473" y="380" width="1" height="1" fill="#a89f84"/><rect x="473" y="390" width="1" height="1" fill="#a89f84"/><rect x="473" y="400" width="1" height="1" fill="#a89f84"/><rect x="473" y="410" width="1" height="1" fill="#a89f84"/><rect x="473" y="420" width="1" height="1" fill="#a89f84"/><rect x="473" y="430" width="1" height="1" fill="#a89f84"/><rect x="33" y="90" width="1" height="1" fill="#a89f84"/><rect x="43" y="90" width="1" height="1" fill="#a89f84"/><rect x="53" y="90" width="1" height="1" fill="#a89f84"/><rect x="63" y="90" width="1" height="1" fill="#a89f84"/><rect x="73" y="90" width="1" height="1" fill="#a89f84"/><rect x="83" y="90" width="1" height="1" fill="#a89f84"/><rect x="93" y="90" width="1" height="1" fill="#a89f84"/><rect x="103" y="90" width="1" height="1" fill="#a89f84"/><rect x="113" y="90" width="1" height="1" fill="#a89f84"/><rect x="123" y="90" width="1" height="1" fill="#a89f84"/><rect x="133" y="90" width="1" height="1" fill="#a89f84"/><rect x="143" y="90" width="1" height="1" fill="#a89f84"/><rect x="153" y="90" width="1" height="1" fill="#a89f84"/><rect x="163" y="90" width="1" height="1" fill="#a89f84"/><rect x="173" y="90" width="1" height="1" fill="#a89f84"/><rect x="183" y="90" width="1" height="1" fill="#a89f84"/><rect x="193" y="90" width="1" height="1" fill="#a89f84"/><rect x="203" y="90" width="1" height="1" fill="#a89f84"/><rect x="213" y="90" width="1" height="1" fill="#a89f84"/><rect x="223" y="90" width="1" height="1" fill="#a89f84"/><rect x="233" y="90" width="1" height="1" fill="#a89f84"/><rect x="243" y="90" width="1" height="1" fill="#a89f84"/><rect x="253" y="90" width="1" height="1" fill="#a89f84"/><rect x="263" y="90" width="1" height="1" fill="#a89f84"/><rect x="273" y="90" width="1" height="1" fill="#a89f84"/><rect x="283" y="90" width="1" height="1" fill="#a89f84"/><rect x="293" y="90" width="1" height="1" fill="#a89f84"/><rect x="303" y="90" width="1" height="1" fill="#a89f84"/><rect x="313" y="90" width="1" height="1" fill="#a89f84"/><rect x="323" y="90" width="1" height="1" fill="#a89f84"/><rect x="333" y="90" width="1" height="1" fill="#a89f84"/><rect x="343" y="90" width="1" height="1" fill="#a89f84"/><rect x="353" y="90" width="1" height="1" fill="#a89f84"/><rect x="363" y="90" width="1" height="1" fill="#a89f84"/><rect x="373" y="90" width="1" height="1" fill="#a89f84"/><rect x="383" y="90" width="1" height="1" fill="#a89f84"/><rect x="393" y="90" width="1" height="1" fill="#a89f84"/><rect x="403" y="90" width="1" height="1" fill="#a89f84"/><rect x="413" y="90" width="1" height="1" fill="#a89f84"/><rect x="423" y="90" width="1" height="1" fill="#a89f84"/><rect x="433" y="90" width="1" height="1" fill="#a89f84"/><rect x="443" y="90" width="1" height="1" fill="#a89f84"/><rect x="453" y="90" width="1" height="1" fill="#a89f84"/><rect x="463" y="90" width="1" height="1" fill="#a89f84"/><rect x="473" y="90" width="1" height="1" fill="#a89f84"/><rect x="483" y="90" width="1" height="1" fill="#a89f84"/><rect x="493" y="90" width="1" height="1" fill="#a89f84"/><rect x="503" y="90" width="1" height="1" fill="#a89f84"/><rect x="513" y="90" width="1" height="1" fill="#a89f84"/><rect x="33" y="140" width="1" height="1" fill="#a89f84"/><rect x="43" y="140" width="1" height="1" fill="#a89f84"/><rect x="53" y="140" width="1" height="1" fill="#a89f84"/><rect x="63" y="140" width="1" height="1" fill="#a89f84"/><rect x="73" y="140" width="1" height="1" fill="#a89f84"/><rect x="83" y="140" width="1" height="1" fill="#a89f84"/><rect x="93" y="140" width="1" height="1" fill="#a89f84"/><rect x="103" y="140" width="1" height="1" fill="#a89f84"/><rect x="113" y="140" width="1" height="1" fill="#a89f84"/><rect x="123" y="140" width="1" height="1" fill="#a89f84"/><rect x="133" y="140" width="1" height="1" fill="#a89f84"/><rect x="143" y="140" width="1" height="1" fill="#a89f84"/><rect x="153" y="140" width="1" height="1" fill="#a89f84"/><rect x="163" y="140" width="1" height="1" fill="#a89f84"/><rect x="173" y="140" width="1" height="1" fill="#a89f84"/><rect x="183" y="140" width="1" height="1" fill="#a89f84"/><rect x="193" y="140" width="1" height="1" fill="#a89f84"/><rect x="203" y="140" width="1" height="1" fill="#a89f84"/><rect x="213" y="140" width="1" height="1" fill="#a89f84"/><rect x="223" y="140" width="1" height="1" fill="#a89f84"/><rect x="233" y="140" width="1" height="1" fill="#a89f84"/><rect x="243" y="140" width="1" height="1" fill="#a89f84"/><rect x="253" y="140" width="1" height="1" fill="#a89f84"/><rect x="263" y="140" width="1" height="1" fill="#a89f84"/><rect x="273" y="140" width="1" height="1" fill="#a89f84"/><rect x="283" y="140" width="1" height="1" fill="#a89f84"/><rect x="293" y="140" width="1" height="1" fill="#a89f84"/><rect x="303" y="140" width="1" height="1" fill="#a89f84"/><rect x="313" y="140" width="1" height="1" fill="#a89f84"/><rect x="323" y="140" width="1" height="1" fill="#a89f84"/><rect x="333" y="140" width="1" height="1" fill="#a89f84"/><rect x="343" y="140" width="1" height="1" fill="#a89f84"/><rect x="353" y="140" width="1" height="1" fill="#a89f84"/><rect x="363" y="140" width="1" height="1" fill="#a89f84"/><rect x="373" y="140" width="1" height="1" fill="#a89f84"/><rect x="383" y="140" width="1" height="1" fill="#a89f84"/><rect x="393" y="140" width="1" height="1" fill="#a89f84"/><rect x="403" y="140" width="1" height="1" fill="#a89f84"/><rect x="413" y="140" width="1" height="1" fill="#a89f84"/><rect x="423" y="140" width="1" height="1" fill="#a89f84"/><rect x="433" y="140" width="1" height="1" fill="#a89f84"/><rect x="443" y="140" width="1" height="1" fill="#a89f84"/><rect x="453" y="140" width="1" height="1" fill="#a89f84"/><rect x="463" y="140" width="1" height="1" fill="#a89f84"/><rect x="473" y="140" width="1" height="1" fill="#a89f84"/><rect x="483" y="140" width="1" height="1" fill="#a89f84"/><rect x="493" y="140" width="1" height="1" fill="#a89f84"/><rect x="503" y="140" width="1" height="1" fill="#a89f84"/><rect x="513" y="140" width="1" height="1" fill="#a89f84"/><rect x="33" y="190" width="1" height="1" fill="#a89f84"/><rect x="43" y="190" width="1" height="1" fill="#a89f84"/><rect x="53" y="190" width="1" height="1" fill="#a89f84"/><rect x="63" y="190" width="1" height="1" fill="#a89f84"/><rect x="73" y="190" width="1" height="1" fill="#a89f84"/><rect x="83" y="190" width="1" height="1" fill="#a89f84"/><rect x="93" y="190" width="1" height="1" fill="#a89f84"/><rect x="103" y="190" width="1" height="1" fill="#a89f84"/><rect x="113" y="190" width="1" height="1" fill="#a89f84"/><rect x="123" y="190" width="1" height="1" fill="#a89f84"/><rect x="133" y="190" width="1" height="1" fill="#a89f84"/><rect x="143" y="190" width="1" height="1" fill="#a89f84"/><rect x="153" y="190" width="1" height="1" fill="#a89f84"/><rect x="163" y="190" width="1" height="1" fill="#a89f84"/><rect x="173" y="190" width="1" height="1" fill="#a89f84"/><rect x="183" y="190" width="1" height="1" fill="#a89f84"/><rect x="193" y="190" width="1" height="1" fill="#a89f84"/><rect x="203" y="190" width="1" height="1" fill="#a89f84"/><rect x="213" y="190" width="1" height="1" fill="#a89f84"/><rect x="223" y="190" width="1" height="1" fill="#a89f84"/><rect x="233" y="190" width="1" height="1" fill="#a89f84"/><rect x="243" y="190" width="1" height="1" fill="#a89f84"/><rect x="253" y="190" width="1" height="1" fill="#a89f84"/><rect x="263" y="190" width="1" height="1" fill="#a89f84"/><rect x="273" y="190" width="1" height="1" fill="#a89f84"/><rect x="283" y="190" width="1" height="1" fill="#a89f84"/><rect x="293" y="190" width="1" height="1" fill="#a89f84"/><rect x="303" y="190" width="1" height="1" fill="#a89f84"/><rect x="313" y="190" width="1" height="1" fill="#a89f84"/><rect x="323" y="190" width="1" height="1" fill="#a89f84"/><rect x="333" y="190" width="1" height="1" fill="#a89f84"/><rect x="343" y="190" width="1" height="1" fill="#a89f84"/><rect x="353" y="190" width="1" height="1" fill="#a89f84"/><rect x="363" y="190" width="1" height="1" fill="#a89f84"/><rect x="373" y="190" width="1" height="1" fill="#a89f84"/><rect x="383" y="190" width="1" height="1" fill="#a89f84"/><rect x="393" y="190" width="1" height="1" fill="#a89f84"/><rect x="403" y="190" width="1" height="1" fill="#a89f84"/><rect x="413" y="190" width="1" height="1" fill="#a89f84"/><rect x="423" y="190" width="1" height="1" fill="#a89f84"/><rect x="433" y="190" width="1" height="1" fill="#a89f84"/><rect x="443" y="190" width="1" height="1" fill="#a89f84"/><rect x="453" y="190" width="1" height="1" fill="#a89f84"/><rect x="463" y="190" width="1" height="1" fill="#a89f84"/><rect x="473" y="190" width="1" height="1" fill="#a89f84"/><rect x="483" y="190" width="1" height="1" fill="#a89f84"/><rect x="493" y="190" width="1" height="1" fill="#a89f84"/><rect x="503" y="190" width="1" height="1" fill="#a89f84"/><rect x="513" y="190" width="1" height="1" fill="#a89f84"/><rect x="33" y="290" width="1" height="1" fill="#a89f84"/><rect x="43" y="290" width="1" height="1" fill="#a89f84"/><rect x="53" y="290" width="1" height="1" fill="#a89f84"/><rect x="63" y="290" width="1" height="1" fill="#a89f84"/><rect x="73" y="290" width="1" height="1" fill="#a89f84"/><rect x="83" y="290" width="1" height="1" fill="#a89f84"/><rect x="93" y="290" width="1" height="1" fill="#a89f84"/><rect x="103" y="290" width="1" height="1" fill="#a89f84"/><rect x="113" y="290" width="1" height="1" fill="#a89f84"/><rect x="123" y="290" width="1" height="1" fill="#a89f84"/><rect x="133" y="290" width="1" height="1" fill="#a89f84"/><rect x="143" y="290" width="1" height="1" fill="#a89f84"/><rect x="153" y="290" width="1" height="1" fill="#a89f84"/><rect x="163" y="290" width="1" height="1" fill="#a89f84"/><rect x="173" y="290" width="1" height="1" fill="#a89f84"/><rect x="183" y="290" width="1" height="1" fill="#a89f84"/><rect x="193" y="290" width="1" height="1" fill="#a89f84"/><rect x="203" y="290" width="1" height="1" fill="#a89f84"/><rect x="213" y="290" width="1" height="1" fill="#a89f84"/><rect x="223" y="290" width="1" height="1" fill="#a89f84"/><rect x="233" y="290" width="1" height="1" fill="#a89f84"/><rect x="243" y="290" width="1" height="1" fill="#a89f84"/><rect x="253" y="290" width="1" height="1" fill="#a89f84"/><rect x="263" y="290" width="1" height="1" fill="#a89f84"/><rect x="273" y="290" width="1" height="1" fill="#a89f84"/><rect x="283" y="290" width="1" height="1" fill="#a89f84"/><rect x="293" y="290" width="1" height="1" fill="#a89f84"/><rect x="303" y="290" width="1" height="1" fill="#a89f84"/><rect x="313" y="290" width="1" height="1" fill="#a89f84"/><rect x="323" y="290" width="1" height="1" fill="#a89f84"/><rect x="333" y="290" width="1" height="1" fill="#a89f84"/><rect x="343" y="290" width="1" height="1" fill="#a89f84"/><rect x="353" y="290" width="1" height="1" fill="#a89f84"/><rect x="363" y="290" width="1" height="1" fill="#a89f84"/><rect x="373" y="290" width="1" height="1" fill="#a89f84"/><rect x="383" y="290" width="1" height="1" fill="#a89f84"/><rect x="393" y="290" width="1" height="1" fill="#a89f84"/><rect x="403" y="290" width="1" height="1" fill="#a89f84"/><rect x="413" y="290" width="1" height="1" fill="#a89f84"/><rect x="423" y="290" width="1" height="1" fill="#a89f84"/><rect x="433" y="290" width="1" height="1" fill="#a89f84"/><rect x="443" y="290" width="1" height="1" fill="#a89f84"/><rect x="453" y="290" width="1" height="1" fill="#a89f84"/><rect x="463" y="290" width="1" height="1" fill="#a89f84"/><rect x="473" y="290" width="1" height="1" fill="#a89f84"/><rect x="483" y="290" width="1" height="1" fill="#a89f84"/><rect x="493" y="290" width="1" height="1" fill="#a89f84"/><rect x="503" y="290" width="1" height="1" fill="#a89f84"/><rect x="513" y="290" width="1" height="1" fill="#a89f84"/><rect x="33" y="340" width="1" height="1" fill="#a89f84"/><rect x="43" y="340" width="1" height="1" fill="#a89f84"/><rect x="53" y="340" width="1" height="1" fill="#a89f84"/><rect x="63" y="340" width="1" height="1" fill="#a89f84"/><rect x="73" y="340" width="1" height="1" fill="#a89f84"/><rect x="83" y="340" width="1" height="1" fill="#a89f84"/><rect x="93" y="340" width="1" height="1" fill="#a89f84"/><rect x="103" y="340" width="1" height="1" fill="#a89f84"/><rect x="113" y="340" width="1" height="1" fill="#a89f84"/><rect x="123" y="340" width="1" height="1" fill="#a89f84"/><rect x="133" y="340" width="1" height="1" fill="#a89f84"/><rect x="143" y="340" width="1" height="1" fill="#a89f84"/><rect x="153" y="340" width="1" height="1" fill="#a89f84"/><rect x="163" y="340" width="1" height="1" fill="#a89f84"/><rect x="173" y="340" width="1" height="1" fill="#a89f84"/><rect x="183" y="340" width="1" height="1" fill="#a89f84"/><rect x="193" y="340" width="1" height="1" fill="#a89f84"/><rect x="203" y="340" width="1" height="1" fill="#a89f84"/><rect x="213" y="340" width="1" height="1" fill="#a89f84"/><rect x="223" y="340" width="1" height="1" fill="#a89f84"/><rect x="233" y="340" width="1" height="1" fill="#a89f84"/><rect x="243" y="340" width="1" height="1" fill="#a89f84"/><rect x="253" y="340" width="1" height="1" fill="#a89f84"/><rect x="263" y="340" width="1" height="1" fill="#a89f84"/><rect x="273" y="340" width="1" height="1" fill="#a89f84"/><rect x="283" y="340" width="1" height="1" fill="#a89f84"/><rect x="293" y="340" width="1" height="1" fill="#a89f84"/><rect x="303" y="340" width="1" height="1" fill="#a89f84"/><rect x="313" y="340" width="1" height="1" fill="#a89f84"/><rect x="323" y="340" width="1" height="1" fill="#a89f84"/><rect x="333" y="340" width="1" height="1" fill="#a89f84"/><rect x="343" y="340" width="1" height="1" fill="#a89f84"/><rect x="353" y="340" width="1" height="1" fill="#a89f84"/><rect x="363" y="340" width="1" height="1" fill="#a89f84"/><rect x="373" y="340" width="1" height="1" fill="#a89f84"/><rect x="383" y="340" width="1" height="1" fill="#a89f84"/><rect x="393" y="340" width="1" height="1" fill="#a89f84"/><rect x="403" y="340" width="1" height="1" fill="#a89f84"/><rect x="413" y="340" width="1" height="1" fill="#a89f84"/><rect x="423" y="340" width="1" height="1" fill="#a89f84"/><rect x="433" y="340" width="1" height="1" fill="#a89f84"/><rect x="443" y="340" width="1" height="1" fill="#a89f84"/><rect x="453" y="340" width="1" height="1" fill="#a89f84"/><rect x="463" y="340" width="1" height="1" fill="#a89f84"/><rect x="473" y="340" width="1" height="1" fill="#a89f84"/><rect x="483" y="340" width="1" height="1" fill="#a89f84"/><rect x="493" y="340" width="1" height="1" fill="#a89f84"/><rect x="503" y="340" width="1" height="1" fill="#a89f84"/><rect x="513" y="340" width="1" height="1" fill="#a89f84"/><rect x="33" y="390" width="1" height="1" fill="#a89f84"/><rect x="43" y="390" width="1" height="1" fill="#a89f84"/><rect x="53" y="390" width="1" height="1" fill="#a89f84"/><rect x="63" y="390" width="1" height="1" fill="#a89f84"/><rect x="73" y="390" width="1" height="1" fill="#a89f84"/><rect x="83" y="390" width="1" height="1" fill="#a89f84"/><rect x="93" y="390" width="1" height="1" fill="#a89f84"/><rect x="103" y="390" width="1" height="1" fill="#a89f84"/><rect x="113" y="390" width="1" height="1" fill="#a89f84"/><rect x="123" y="390" width="1" height="1" fill="#a89f84"/><rect x="133" y="390" width="1" height="1" fill="#a89f84"/><rect x="143" y="390" width="1" height="1" fill="#a89f84"/><rect x="153" y="390" width="1" height="1" fill="#a89f84"/><rect x="163" y="390" width="1" height="1" fill="#a89f84"/><rect x="173" y="390" width="1" height="1" fill="#a89f84"/><rect x="183" y="390" width="1" height="1" fill="#a89f84"/><rect x="193" y="390" width="1" height="1" fill="#a89f84"/><rect x="203" y="390" width="1" height="1" fill="#a89f84"/><rect x="213" y="390" width="1" height="1" fill="#a89f84"/><rect x="223" y="390" width="1" height="1" fill="#a89f84"/><rect x="233" y="390" width="1" height="1" fill="#a89f84"/><rect x="243" y="390" width="1" height="1" fill="#a89f84"/><rect x="253" y="390" width="1" height="1" fill="#a89f84"/><rect x="263" y="390" width="1" height="1" fill="#a89f84"/><rect x="273" y="390" width="1" height="1" fill="#a89f84"/><rect x="283" y="390" width="1" height="1" fill="#a89f84"/><rect x="293" y="390" width="1" height="1" fill="#a89f84"/><rect x="303" y="390" width="1" height="1" fill="#a89f84"/><rect x="313" y="390" width="1" height="1" fill="#a89f84"/><rect x="323" y="390" width="1" height="1" fill="#a89f84"/><rect x="333" y="390" width="1" height="1" fill="#a89f84"/><rect x="343" y="390" width="1" height="1" fill="#a89f84"/><rect x="353" y="390" width="1" height="1" fill="#a89f84"/><rect x="363" y="390" width="1" height="1" fill="#a89f84"/><rect x="373" y="390" width="1" height="1" fill="#a89f84"/><rect x="383" y="390" width="1" height="1" fill="#a89f84"/><rect x="393" y="390" width="1" height="1" fill="#a89f84"/><rect x="403" y="390" width="1" height="1" fill="#a89f84"/><rect x="413" y="390" width="1" height="1" fill="#a89f84"/><rect x="423" y="390" width="1" height="1" fill="#a89f84"/><rect x="433" y="390" width="1" height="1" fill="#a89f84"/><rect x="443" y="390" width="1" height="1" fill="#a89f84"/><rect x="453" y="390" width="1" height="1" fill="#a89f84"/><rect x="463" y="390" width="1" height="1" fill="#a89f84"/><rect x="473" y="390" width="1" height="1" fill="#a89f84"/><rect x="483" y="390" width="1" height="1" fill="#a89f84"/><rect x="493" y="390" width="1" height="1" fill="#a89f84"/><rect x="503" y="390" width="1" height="1" fill="#a89f84"/><rect x="513" y="390" width="1" height="1" fill="#a89f84"/><rect x="23" y="214" width="1" height="10" fill="#d4d400"/><rect x="23" y="214" width="1" height="1" fill="#c8c070"/><rect x="23" y="215" width="1" height="1" fill="#c8c070"/><rect x="23" y="216" width="1" height="1" fill="#c8c070"/><rect x="23" y="217" width="1" height="1" fill="#c8c070"/><rect x="23" y="218" width="1" height="1" fill="#c8c070"/><rect x="23" y="219" width="1" height="1" fill="#c8c070"/><rect x="23" y="220" width="1" height="1" fill="#c8c070"/><rect x="23" y="221" width="1" height="1" fill="#c8c070"/><rect x="23" y="222" width="1" height="1" fill="#c8c070"/><rect x="23" y="223" width="1" height="1" fill="#c8c070"/><rect x="24" y="206" width="1" height="9" fill="#d4d400"/><rect x="24" y="210" width="1" height="1" fill="#c8c070"/><rect x="25" y="197" width="1" height="10" fill="#d4d400"/><rect x="25" y="200" width="1" height="1" fill="#c8c070"/><rect x="26" y="189" width="1" height="9" fill="#d4d400"/><rect x="26" y="190" width="1" height="1" fill="#c8c070"/><rect x="27" y="181" width="1" height="9" fill="#d4d400"/><rect x="28" y="173" width="1" height="9" fill="#d4d400"/><rect x="29" y="165" width="1" height="9" fill="#d4d400"/><rect x="30" y="158" width="1" height="8" fill="#d4d400"/><rect x="31" y="151" width="1" height="8" fill="#d4d400"/><rect x="32" y="144" width="1" height="8" fill="#d4d400"/><rect x="33" y="138" width="1" height="7" fill="#d4d400"/><rect x="33" y="140" width="1" height="1" fill="#c8c070"/><rect x="34" y="132" width="1" height="7" fill="#d4d400"/><rect x="35" y="126" width="1" height="7" fill="#d4d400"/><rect x="36" y="120" width="1" height="7" fill="#d4d400"/><rect x="37" y="115" width="1" height="6" fill="#d4d400"/><rect x="38" y="110" width="1" height="6" fill="#d4d400"/><rect x="39" y="105" width="1" height="6" fill="#d4d400"/><rect x="40" y="101" width="1" height="5" fill="#d4d400"/><rect x="41" y="96" width="1" height="6" fill="#d4d400"/><rect x="42" y="93" width="1" height="4" fill="#d4d400"/><rect x="43" y="89" width="1" height="5" fill="#d4d400"/><rect x="43" y="90" width="1" height="1" fill="#c8c070"/><rect x="44" y="86" width="1" height="4" fill="#d4d400"/><rect x="45" y="83" width="1" height="4" fill="#d4d400"/><rect x="46" y="80" width="1" height="4" fill="#d4d400"/><rect x="47" y="77" width="1" height="4" fill="#d4d400"/><rect x="48" y="75" width="1" height="3" fill="#d4d400"/><rect x="49" y="73" width="1" height="3" fill="#d4d400"/><rect x="50" y="72" width="1" height="2" fill="#d4d400"/><rect x="51" y="71" width="1" height="2" fill="#d4d400"/><rect x="52" y="70" width="1" height="2" fill="#d4d400"/><rect x="53" y="70" width="1" height="1" fill="#d4d400"/><rect x="54" y="70" width="1" height="1" fill="#d4d400"/><rect x="55" y="70" width="1" height="1" fill="#d4d400"/><rect x="56" y="70" width="1" height="1" fill="#d4d400"/><rect x="57" y="70" width="1" height="2" fill="#d4d400"/><rect x="58" y="71" width="1" height="3" fill="#d4d400"/><rect x="59" y="73" width="1" height="3" fill="#d4d400"/><rect x="60" y="75" width="1" height="3" fill="#d4d400"/><rect x="61" y="77" width="1" height="4" fill="#d4d400"/><rect x="62" y="80" width="1" height="4" fill="#d4d400"/><rect x="63" y="83" width="1" height="5" fill="#d4d400"/><rect x="64" y="87" width="1" height="5" fill="#d4d400"/><rect x="65" y="91" width="1" height="6" fill="#d4d400"/><rect x="66" y="96" width="1" height="6" fill="#d4d400"/><rect x="67" y="101" width="1" height="7" fill="#d4d400"/><rect x="68" y="107" width="1" height="7" fill="#d4d400"/><rect x="69" y="113" width="1" height="7" fill="#d4d400"/><rect x="70" y="119" width="1" height="8" fill="#d4d400"/><rect x="71" y="126" width="1" height="9" fill="#d4d400"/><rect x="72" y="134" width="1" height="8" fill="#d4d400"/><rect x="73" y="141" width="1" height="10" fill="#d4d400"/><rect x="73" y="150" width="1" height="1" fill="#c8c070"/><rect x="74" y="150" width="1" height="9" fill="#d4d400"/><rect x="75" y="158" width="1" height="10" fill="#d4d400"/><rect x="76" y="167" width="1" height="10" fill="#d4d400"/><rect x="77" y="176" width="1" height="10" fill="#d4d400"/><rect x="78" y="185" width="1" height="10" fill="#d4d400"/><rect x="79" y="194" width="1" height="11" fill="#d4d400"/><rect x="80" y="204" width="1" height="10" fill="#d4d400"/><rect x="81" y="213" width="1" height="11" fill="#d4d400"/><rect x="82" y="223" width="1" height="11" fill="#d4d400"/><rect x="83" y="233" width="1" height="10" fill="#d4d400"/><rect x="83" y="236" width="1" height="1" fill="#c8c070"/><rect x="83" y="237" width="1" height="1" fill="#c8c070"/><rect x="83" y="238" width="1" height="1" fill="#c8c070"/><rect x="83" y="239" width="1" height="1" fill="#c8c070"/><rect x="83" y="240" width="1" height="1" fill="#c8c070"/><rect x="83" y="241" width="1" height="1" fill="#c8c070"/><rect x="83" y="242" width="1" height="1" fill="#c8c070"/><rect x="84" y="242" width="1" height="11" fill="#d4d400"/><rect x="85" y="252" width="1" height="10" fill="#d4d400"/><rect x="86" y="261" width="1" height="11" fill="#d4d400"/><rect x="87" y="271" width="1" height="10" fill="#d4d400"/><rect x="88" y="280" width="1" height="10" fill="#d4d400"/><rect x="89" y="289" width="1" height="10" fill="#d4d400"/><rect x="90" y="298" width="1" height="10" fill="#d4d400"/><rect x="91" y="307" width="1" height="9" fill="#d4d400"/><rect x="92" y="315" width="1" height="9" fill="#d4d400"/><rect x="93" y="323" width="1" height="9" fill="#d4d400"/><rect x="94" y="331" width="1" height="9" fill="#d4d400"/><rect x="95" y="339" width="1" height="8" fill="#d4d400"/><rect x="96" y="346" width="1" height="8" fill="#d4d400"/><rect x="97" y="353" width="1" height="8" fill="#d4d400"/><rect x="98" y="360" width="1" height="7" fill="#d4d400"/><rect x="99" y="366" width="1" height="7" fill="#d4d400"/><rect x="100" y="372" width="1" height="7" fill="#d4d400"/><rect x="101" y="378" width="1" height="6" fill="#d4d400"/><rect x="102" y="383" width="1" height="6" fill="#d4d400"/><rect x="103" y="388" width="1" height="5" fill="#d4d400"/><rect x="103" y="390" width="1" height="1" fill="#c8c070"/><rect x="104" y="392" width="1" height="5" fill="#d4d400"/><rect x="105" y="396" width="1" height="5" fill="#d4d400"/><rect x="106" y="400" width="1" height="5" fill="#d4d400"/><rect x="107" y="404" width="1" height="4" fill="#d4d400"/><rect x="108" y="407" width="1" height="4" fill="#d4d400"/><rect x="109" y="410" width="1" height="3" fill="#d4d400"/><rect x="110" y="412" width="1" height="3" fill="#d4d400"/><rect x="111" y="414" width="1" height="3" fill="#d4d400"/><rect x="112" y="416" width="1" height="2" fill="#d4d400"/><rect x="113" y="417" width="1" height="2" fill="#d4d400"/><rect x="114" y="418" width="1" height="1" fill="#d4d400"/><rect x="115" y="418" width="1" height="1" fill="#d4d400"/><rect x="116" y="418" width="1" height="1" fill="#d4d400"/><rect x="117" y="417" width="1" height="2" fill="#d4d400"/><rect x="118" y="416" width="1" height="2" fill="#d4d400"/><rect x="119" y="415" width="1" height="2" fill="#d4d400"/><rect x="120" y="413" width="1" height="3" fill="#d4d400"/><rect x="121" y="410" width="1" height="4" fill="#d4d400"/><rect x="122" y="407" width="1" height="4" fill="#d4d400"/><rect x="123" y="404" width="1" height="4" fill="#d4d400"/><rect x="124" y="400" width="1" height="5" fill="#d4d400"/><rect x="125" y="396" width="1" height="5" fill="#d4d400"/><rect x="126" y="391" width="1" height="6" fill="#d4d400"/><rect x="127" y="386" width="1" height="6" fill="#d4d400"/><rect x="128" y="381" width="1" height="6" fill="#d4d400"/><rect x="129" y="375" width="1" height="7" fill="#d4d400"/><rect x="130" y="368" width="1" height="8" fill="#d4d400"/><rect x="131" y="362" width="1" height="7" fill="#d4d400"/><rect x="132" y="354" width="1" height="9" fill="#d4d400"/><rect x="133" y="347" width="1" height="8" fill="#d4d400"/><rect x="134" y="339" width="1" height="9" fill="#d4d400"/><rect x="135" y="331" width="1" height="9" fill="#d4d400"/><rect x="136" y="323" width="1" height="9" fill="#d4d400"/><rect x="137" y="314" width="1" height="10" fill="#d4d400"/><rect x="138" y="305" width="1" height="10" fill="#d4d400"/><rect x="139" y="297" width="1" height="9" fill="#d4d400"/><rect x="140" y="287" width="1" height="11" fill="#d4d400"/><rect x="141" y="278" width="1" height="10" fill="#d4d400"/><rect x="142" y="269" width="1" height="10" fill="#d4d400"/><rect x="143" y="260" width="1" height="10" fill="#d4d400"/><rect x="144" y="251" width="1" height="10" fill="#d4d400"/><rect x="145" y="241" width="1" height="11" fill="#d4d400"/><rect x="146" y="232" width="1" height="10" fill="#d4d400"/><rect x="146" y="240" width="1" height="1" fill="#c8c070"/><rect x="147" y="223" width="1" height="10" fill="#d4d400"/><rect x="148" y="214" width="1" height="10" fill="#d4d400"/><rect x="149" y="206" width="1" height="9" fill="#d4d400"/><rect x="150" y="197" width="1" height="10" fill="#d4d400"/><rect x="151" y="189" width="1" height="9" fill="#d4d400"/><rect x="152" y="181" width="1" height="9" fill="#d4d400"/><rect x="153" y="173" width="1" height="9" fill="#d4d400"/><rect x="154" y="165" width="1" height="9" fill="#d4d400"/><rect x="155" y="158" width="1" height="8" fill="#d4d400"/><rect x="156" y="151" width="1" height="8" fill="#d4d400"/><rect x="157" y="144" width="1" height="8" fill="#d4d400"/><rect x="158" y="138" width="1" height="7" fill="#d4d400"/><rect x="159" y="132" width="1" height="7" fill="#d4d400"/><rect x="160" y="126" width="1" height="7" fill="#d4d400"/><rect x="161" y="120" width="1" height="7" fill="#d4d400"/><rect x="162" y="115" width="1" height="6" fill="#d4d400"/><rect x="163" y="110" width="1" height="6" fill="#d4d400"/><rect x="164" y="105" width="1" height="6" fill="#d4d400"/><rect x="165" y="101" width="1" height="5" fill="#d4d400"/><rect x="166" y="96" width="1" height="6" fill="#d4d400"/><rect x="167" y="93" width="1" height="4" fill="#d4d400"/><rect x="168" y="89" width="1" height="5" fill="#d4d400"/><rect x="169" y="86" width="1" height="4" fill="#d4d400"/><rect x="170" y="83" width="1" height="4" fill="#d4d400"/><rect x="171" y="80" width="1" height="4" fill="#d4d400"/><rect x="172" y="77" width="1" height="4" fill="#d4d400"/><rect x="173" y="75" width="1" height="3" fill="#d4d400"/><rect x="174" y="73" width="1" height="3" fill="#d4d400"/><rect x="175" y="72" width="1" height="2" fill="#d4d400"/><rect x="176" y="71" width="1" height="2" fill="#d4d400"/><rect x="177" y="70" width="1" height="2" fill="#d4d400"/><rect x="178" y="70" width="1" height="1" fill="#d4d400"/><rect x="179" y="70" width="1" height="1" fill="#d4d400"/><rect x="180" y="70" width="1" height="1" fill="#d4d400"/><rect x="181" y="70" width="1" height="1" fill="#d4d400"/><rect x="182" y="70" width="1" height="2" fill="#d4d400"/><rect x="183" y="71" width="1" height="3" fill="#d4d400"/><rect x="184" y="73" width="1" height="3" fill="#d4d400"/><rect x="185" y="75" width="1" height="3" fill="#d4d400"/><rect x="186" y="77" width="1" height="4" fill="#d4d400"/><rect x="187" y="80" width="1" height="4" fill="#d4d400"/><rect x="188" y="83" width="1" height="5" fill="#d4d400"/><rect x="189" y="87" width="1" height="5" fill="#d4d400"/><rect x="190" y="91" width="1" height="6" fill="#d4d400"/><rect x="191" y="96" width="1" height="6" fill="#d4d400"/><rect x="192" y="101" width="1" height="7" fill="#d4d400"/><rect x="193" y="107" width="1" height="7" fill="#d4d400"/><rect x="194" y="113" width="1" height="7" fill="#d4d400"/><rect x="195" y="119" width="1" height="8" fill="#d4d400"/><rect x="196" y="126" width="1" height="9" fill="#d4d400"/><rect x="197" y="134" width="1" height="8" fill="#d4d400"/><rect x="198" y="141" width="1" height="10" fill="#d4d400"/><rect x="199" y="150" width="1" height="9" fill="#d4d400"/><rect x="200" y="158" width="1" height="10" fill="#d4d400"/><rect x="201" y="167" width="1" height="10" fill="#d4d400"/><rect x="202" y="176" width="1" height="10" fill="#d4d400"/><rect x="203" y="185" width="1" height="10" fill="#d4d400"/><rect x="203" y="190" width="1" height="1" fill="#c8c070"/><rect x="204" y="194" width="1" height="11" fill="#d4d400"/><rect x="205" y="204" width="1" height="10" fill="#d4d400"/><rect x="206" y="213" width="1" height="11" fill="#d4d400"/><rect x="207" y="223" width="1" height="11" fill="#d4d400"/><rect x="208" y="233" width="1" height="10" fill="#d4d400"/><rect x="208" y="240" width="1" height="1" fill="#c8c070"/><rect x="209" y="242" width="1" height="11" fill="#d4d400"/><rect x="210" y="252" width="1" height="10" fill="#d4d400"/><rect x="211" y="261" width="1" height="11" fill="#d4d400"/><rect x="212" y="271" width="1" height="10" fill="#d4d400"/><rect x="213" y="280" width="1" height="10" fill="#d4d400"/><rect x="214" y="289" width="1" height="10" fill="#d4d400"/><rect x="215" y="298" width="1" height="10" fill="#d4d400"/><rect x="216" y="307" width="1" height="9" fill="#d4d400"/><rect x="217" y="315" width="1" height="9" fill="#d4d400"/><rect x="218" y="323" width="1" height="9" fill="#d4d400"/><rect x="219" y="331" width="1" height="9" fill="#d4d400"/><rect x="220" y="339" width="1" height="8" fill="#d4d400"/><rect x="221" y="346" width="1" height="8" fill="#d4d400"/><rect x="222" y="353" width="1" height="8" fill="#d4d400"/><rect x="223" y="360" width="1" height="7" fill="#d4d400"/><rect x="223" y="360" width="1" height="1" fill="#c8c070"/><rect x="224" y="366" width="1" height="7" fill="#d4d400"/><rect x="225" y="372" width="1" height="7" fill="#d4d400"/><rect x="226" y="378" width="1" height="6" fill="#d4d400"/><rect x="227" y="383" width="1" height="6" fill="#d4d400"/><rect x="228" y="388" width="1" height="5" fill="#d4d400"/><rect x="229" y="392" width="1" height="5" fill="#d4d400"/><rect x="230" y="396" width="1" height="5" fill="#d4d400"/><rect x="231" y="400" width="1" height="5" fill="#d4d400"/><rect x="232" y="404" width="1" height="4" fill="#d4d400"/><rect x="233" y="407" width="1" height="4" fill="#d4d400"/><rect x="234" y="410" width="1" height="3" fill="#d4d400"/><rect x="235" y="412" width="1" height="3" fill="#d4d400"/><rect x="236" y="414" width="1" height="3" fill="#d4d400"/><rect x="237" y="416" width="1" height="2" fill="#d4d400"/><rect x="238" y="417" width="1" height="2" fill="#d4d400"/><rect x="239" y="418" width="1" height="1" fill="#d4d400"/><rect x="240" y="418" width="1" height="1" fill="#d4d400"/><rect x="241" y="418" width="1" height="1" fill="#d4d400"/><rect x="242" y="417" width="1" height="2" fill="#d4d400"/><rect x="243" y="416" width="1" height="2" fill="#d4d400"/><rect x="244" y="415" width="1" height="2" fill="#d4d400"/><rect x="245" y="413" width="1" height="3" fill="#d4d400"/><rect x="246" y="410" width="1" height="4" fill="#d4d400"/><rect x="247" y="407" width="1" height="4" fill="#d4d400"/><rect x="248" y="404" width="1" height="4" fill="#d4d400"/><rect x="249" y="400" width="1" height="5" fill="#d4d400"/><rect x="250" y="396" width="1" height="5" fill="#d4d400"/><rect x="251" y="391" width="1" height="6" fill="#d4d400"/><rect x="252" y="386" width="1" height="6" fill="#d4d400"/><rect x="253" y="381" width="1" height="6" fill="#d4d400"/><rect x="254" y="375" width="1" height="7" fill="#d4d400"/><rect x="255" y="368" width="1" height="8" fill="#d4d400"/><rect x="256" y="362" width="1" height="7" fill="#d4d400"/><rect x="257" y="354" width="1" height="9" fill="#d4d400"/><rect x="258" y="347" width="1" height="8" fill="#d4d400"/><rect x="259" y="339" width="1" height="9" fill="#d4d400"/><rect x="260" y="331" width="1" height="9" fill="#d4d400"/><rect x="261" y="323" width="1" height="9" fill="#d4d400"/><rect x="262" y="314" width="1" height="10" fill="#d4d400"/><rect x="263" y="305" width="1" height="10" fill="#d4d400"/><rect x="264" y="297" width="1" height="9" fill="#d4d400"/><rect x="265" y="287" width="1" height="11" fill="#d4d400"/><rect x="266" y="278" width="1" height="10" fill="#d4d400"/><rect x="267" y="269" width="1" height="10" fill="#d4d400"/><rect x="268" y="260" width="1" height="10" fill="#d4d400"/><rect x="269" y="251" width="1" height="10" fill="#d4d400"/><rect x="269" y="260" width="1" height="1" fill="#c8c070"/><rect x="270" y="241" width="1" height="11" fill="#d4d400"/><rect x="270" y="250" width="1" height="1" fill="#c8c070"/><rect x="271" y="232" width="1" height="10" fill="#d4d400"/><rect x="271" y="240" width="1" height="1" fill="#c8c070"/><rect x="272" y="223" width="1" height="10" fill="#d4d400"/><rect x="272" y="230" width="1" height="1" fill="#c8c070"/><rect x="273" y="214" width="1" height="10" fill="#d4d400"/><rect x="273" y="214" width="1" height="1" fill="#c8c070"/><rect x="273" y="215" width="1" height="1" fill="#c8c070"/><rect x="273" y="216" width="1" height="1" fill="#c8c070"/><rect x="273" y="217" width="1" height="1" fill="#c8c070"/><rect x="273" y="218" width="1" height="1" fill="#c8c070"/><rect x="273" y="219" width="1" height="1" fill="#c8c070"/><rect x="273" y="220" width="1" height="1" fill="#c8c070"/><rect x="273" y="221" width="1" height="1" fill="#c8c070"/><rect x="273" y="222" width="1" height="1" fill="#c8c070"/><rect x="273" y="223" width="1" height="1" fill="#c8c070"/><rect x="274" y="206" width="1" height="9" fill="#d4d400"/><rect x="274" y="210" width="1" height="1" fill="#c8c070"/><rect x="275" y="197" width="1" height="10" fill="#d4d400"/><rect x="275" y="200" width="1" height="1" fill="#c8c070"/><rect x="276" y="189" width="1" height="9" fill="#d4d400"/><rect x="276" y="190" width="1" height="1" fill="#c8c070"/><rect x="277" y="181" width="1" height="9" fill="#d4d400"/><rect x="278" y="173" width="1" height="9" fill="#d4d400"/><rect x="279" y="165" width="1" height="9" fill="#d4d400"/><rect x="280" y="158" width="1" height="8" fill="#d4d400"/><rect x="281" y="151" width="1" height="8" fill="#d4d400"/><rect x="282" y="144" width="1" height="8" fill="#d4d400"/><rect x="283" y="138" width="1" height="7" fill="#d4d400"/><rect x="283" y="140" width="1" height="1" fill="#c8c070"/><rect x="284" y="132" width="1" height="7" fill="#d4d400"/><rect x="285" y="126" width="1" height="7" fill="#d4d400"/><rect x="286" y="120" width="1" height="7" fill="#d4d400"/><rect x="287" y="115" width="1" height="6" fill="#d4d400"/><rect x="288" y="110" width="1" height="6" fill="#d4d400"/><rect x="289" y="105" width="1" height="6" fill="#d4d400"/><rect x="290" y="101" width="1" height="5" fill="#d4d400"/><rect x="291" y="96" width="1" height="6" fill="#d4d400"/><rect x="292" y="93" width="1" height="4" fill="#d4d400"/><rect x="293" y="89" width="1" height="5" fill="#d4d400"/><rect x="293" y="90" width="1" height="1" fill="#c8c070"/><rect x="294" y="86" width="1" height="4" fill="#d4d400"/><rect x="295" y="83" width="1" height="4" fill="#d4d400"/><rect x="296" y="80" width="1" height="4" fill="#d4d400"/><rect x="297" y="77" width="1" height="4" fill="#d4d400"/><rect x="298" y="75" width="1" height="3" fill="#d4d400"/><rect x="299" y="73" width="1" height="3" fill="#d4d400"/><rect x="300" y="72" width="1" height="2" fill="#d4d400"/><rect x="301" y="71" width="1" height="2" fill="#d4d400"/><rect x="302" y="70" width="1" height="2" fill="#d4d400"/><rect x="303" y="70" width="1" height="1" fill="#d4d400"/><rect x="304" y="70" width="1" height="1" fill="#d4d400"/><rect x="305" y="70" width="1" height="1" fill="#d4d400"/><rect x="306" y="70" width="1" height="1" fill="#d4d400"/><rect x="307" y="70" width="1" height="2" fill="#d4d400"/><rect x="308" y="71" width="1" height="3" fill="#d4d400"/><rect x="309" y="73" width="1" height="3" fill="#d4d400"/><rect x="310" y="75" width="1" height="3" fill="#d4d400"/><rect x="311" y="77" width="1" height="4" fill="#d4d400"/><rect x="312" y="80" width="1" height="4" fill="#d4d400"/><rect x="313" y="83" width="1" height="5" fill="#d4d400"/><rect x="314" y="87" width="1" height="5" fill="#d4d400"/><rect x="315" y="91" width="1" height="6" fill="#d4d400"/><rect x="316" y="96" width="1" height="6" fill="#d4d400"/><rect x="317" y="101" width="1" height="7" fill="#d4d400"/><rect x="318" y="107" width="1" height="7" fill="#d4d400"/><rect x="319" y="113" width="1" height="7" fill="#d4d400"/><rect x="320" y="119" width="1" height="8" fill="#d4d400"/><rect x="321" y="126" width="1" height="9" fill="#d4d400"/><rect x="322" y="134" width="1" height="8" fill="#d4d400"/><rect x="323" y="141" width="1" height="10" fill="#d4d400"/><rect x="323" y="150" width="1" height="1" fill="#c8c070"/><rect x="324" y="150" width="1" height="9" fill="#d4d400"/><rect x="325" y="158" width="1" height="10" fill="#d4d400"/><rect x="326" y="167" width="1" height="10" fill="#d4d400"/><rect x="327" y="176" width="1" height="10" fill="#d4d400"/><rect x="328" y="185" width="1" height="10" fill="#d4d400"/><rect x="329" y="194" width="1" height="11" fill="#d4d400"/><rect x="330" y="204" width="1" height="10" fill="#d4d400"/><rect x="331" y="213" width="1" height="11" fill="#d4d400"/><rect x="332" y="223" width="1" height="11" fill="#d4d400"/><rect x="333" y="233" width="1" height="10" fill="#d4d400"/><rect x="333" y="236" width="1" height="1" fill="#c8c070"/><rect x="333" y="237" width="1" height="1" fill="#c8c070"/><rect x="333" y="238" width="1" height="1" fill="#c8c070"/><rect x="333" y="239" width="1" height="1" fill="#c8c070"/><rect x="333" y="240" width="1" height="1" fill="#c8c070"/><rect x="333" y="241" width="1" height="1" fill="#c8c070"/><rect x="333" y="242" width="1" height="1" fill="#c8c070"/><rect x="334" y="242" width="1" height="11" fill="#d4d400"/><rect x="335" y="252" width="1" height="10" fill="#d4d400"/><rect x="336" y="261" width="1" height="11" fill="#d4d400"/><rect x="337" y="271" width="1" height="10" fill="#d4d400"/><rect x="338" y="280" width="1" height="10" fill="#d4d400"/><rect x="339" y="289" width="1" height="10" fill="#d4d400"/><rect x="340" y="298" width="1" height="10" fill="#d4d400"/><rect x="341" y="307" width="1" height="9" fill="#d4d400"/><rect x="342" y="315" width="1" height="9" fill="#d4d400"/><rect x="343" y="323" width="1" height="9" fill="#d4d400"/><rect x="344" y="331" width="1" height="9" fill="#d4d400"/><rect x="345" y="339" width="1" height="8" fill="#d4d400"/><rect x="346" y="346" width="1" height="8" fill="#d4d400"/><rect x="347" y="353" width="1" height="8" fill="#d4d400"/><rect x="348" y="360" width="1" height="7" fill="#d4d400"/><rect x="349" y="366" width="1" height="7" fill="#d4d400"/><rect x="350" y="372" width="1" height="7" fill="#d4d400"/><rect x="351" y="378" width="1" height="6" fill="#d4d400"/><rect x="352" y="383" width="1" height="6" fill="#d4d400"/><rect x="353" y="388" width="1" height="5" fill="#d4d400"/><rect x="353" y="390" width="1" height="1" fill="#c8c070"/><rect x="354" y="392" width="1" height="5" fill="#d4d400"/><rect x="355" y="396" width="1" height="5" fill="#d4d400"/><rect x="356" y="400" width="1" height="5" fill="#d4d400"/><rect x="357" y="404" width="1" height="4" fill="#d4d400"/><rect x="358" y="407" width="1" height="4" fill="#d4d400"/><rect x="359" y="410" width="1" height="3" fill="#d4d400"/><rect x="360" y="412" width="1" height="3" fill="#d4d400"/><rect x="361" y="414" width="1" height="3" fill="#d4d400"/><rect x="362" y="416" width="1" height="2" fill="#d4d400"/><rect x="363" y="417" width="1" height="2" fill="#d4d400"/><rect x="364" y="418" width="1" height="1" fill="#d4d400"/><rect x="365" y="418" width="1" height="1" fill="#d4d400"/><rect x="366" y="418" width="1" height="1" fill="#d4d400"/><rect x="367" y="417" width="1" height="2" fill="#d4d400"/><rect x="368" y="416" width="1" height="2" fill="#d4d400"/><rect x="369" y="415" width="1" height="2" fill="#d4d400"/><rect x="370" y="413" width="1" height="3" fill="#d4d400"/><rect x="371" y="410" width="1" height="4" fill="#d4d400"/><rect x="372" y="407" width="1" height="4" fill="#d4d400"/><rect x="373" y="404" width="1" height="4" fill="#d4d400"/><rect x="374" y="400" width="1" height="5" fill="#d4d400"/><rect x="375" y="396" width="1" height="5" fill="#d4d400"/><rect x="376" y="391" width="1" height="6" fill="#d4d400"/><rect x="377" y="386" width="1" height="6" fill="#d4d400"/><rect x="378" y="381" width="1" height="6" fill="#d4d400"/><rect x="379" y="375" width="1" height="7" fill="#d4d400"/><rect x="380" y="368" width="1" height="8" fill="#d4d400"/><rect x="381" y="362" width="1" height="7" fill="#d4d400"/><rect x="382" y="354" width="1" height="9" fill="#d4d400"/><rect x="383" y="347" width="1" height="8" fill="#d4d400"/><rect x="384" y="339" width="1" height="9" fill="#d4d400"/><rect x="385" y="331" width="1" height="9" fill="#d4d400"/><rect x="386" y="323" width="1" height="9" fill="#d4d400"/><rect x="387" y="314" width="1" height="10" fill="#d4d400"/><rect x="388" y="305" width="1" height="10" fill="#d4d400"/><rect x="389" y="297" width="1" height="9" fill="#d4d400"/><rect x="390" y="287" width="1" height="11" fill="#d4d400"/><rect x="391" y="278" width="1" height="10" fill="#d4d400"/><rect x="392" y="269" width="1" height="10" fill="#d4d400"/><rect x="393" y="260" width="1" height="10" fill="#d4d400"/><rect x="394" y="251" width="1" height="10" fill="#d4d400"/><rect x="395" y="241" width="1" height="11" fill="#d4d400"/><rect x="396" y="232" width="1" height="10" fill="#d4d400"/><rect x="396" y="240" width="1" height="1" fill="#c8c070"/><rect x="397" y="223" width="1" height="10" fill="#d4d400"/><rect x="398" y="214" width="1" height="10" fill="#d4d400"/><rect x="399" y="206" width="1" height="9" fill="#d4d400"/><rect x="400" y="197" width="1" height="10" fill="#d4d400"/><rect x="401" y="189" width="1" height="9" fill="#d4d400"/><rect x="402" y="181" width="1" height="9" fill="#d4d400"/><rect x="403" y="173" width="1" height="9" fill="#d4d400"/><rect x="404" y="165" width="1" height="9" fill="#d4d400"/><rect x="405" y="158" width="1" height="8" fill="#d4d400"/><rect x="406" y="151" width="1" height="8" fill="#d4d400"/><rect x="407" y="144" width="1" height="8" fill="#d4d400"/><rect x="408" y="138" width="1" height="7" fill="#d4d400"/><rect x="409" y="132" width="1" height="7" fill="#d4d400"/><rect x="410" y="126" width="1" height="7" fill="#d4d400"/><rect x="411" y="120" width="1" height="7" fill="#d4d400"/><rect x="412" y="115" width="1" height="6" fill="#d4d400"/><rect x="413" y="110" width="1" height="6" fill="#d4d400"/><rect x="414" y="105" width="1" height="6" fill="#d4d400"/><rect x="415" y="101" width="1" height="5" fill="#d4d400"/><rect x="416" y="96" width="1" height="6" fill="#d4d400"/><rect x="417" y="93" width="1" height="4" fill="#d4d400"/><rect x="418" y="89" width="1" height="5" fill="#d4d400"/><rect x="419" y="86" width="1" height="4" fill="#d4d400"/><rect x="420" y="83" width="1" height="4" fill="#d4d400"/><rect x="421" y="80" width="1" height="4" fill="#d4d400"/><rect x="422" y="77" width="1" height="4" fill="#d4d400"/><rect x="423" y="75" width="1" height="3" fill="#d4d400"/><rect x="424" y="73" width="1" height="3" fill="#d4d400"/><rect x="425" y="72" width="1" height="2" fill="#d4d400"/><rect x="426" y="71" width="1" height="2" fill="#d4d400"/><rect x="427" y="70" width="1" height="2" fill="#d4d400"/><rect x="428" y="70" width="1" height="1" fill="#d4d400"/><rect x="429" y="70" width="1" height="1" fill="#d4d400"/><rect x="430" y="70" width="1" height="1" fill="#d4d400"/><rect x="431" y="70" width="1" height="1" fill="#d4d400"/><rect x="432" y="70" width="1" height="2" fill="#d4d400"/><rect x="433" y="71" width="1" height="3" fill="#d4d400"/><rect x="434" y="73" width="1" height="3" fill="#d4d400"/><rect x="435" y="75" width="1" height="3" fill="#d4d400"/><rect x="436" y="77" width="1" height="4" fill="#d4d400"/><rect x="437" y="80" width="1" height="4" fill="#d4d400"/><rect x="438" y="83" width="1" height="5" fill="#d4d400"/><rect x="439" y="87" width="1" height="5" fill="#d4d400"/><rect x="440" y="91" width="1" height="6" fill="#d4d400"/><rect x="441" y="96" width="1" height="6" fill="#d4d400"/><rect x="442" y="101" width="1" height="7" fill="#d4d400"/><rect x="443" y="107" width="1" height="7" fill="#d4d400"/><rect x="444" y="113" width="1" height="7" fill="#d4d400"/><rect x="445" y="119" width="1" height="8" fill="#d4d400"/><rect x="446" y="126" width="1" height="9" fill="#d4d400"/><rect x="447" y="134" width="1" height="8" fill="#d4d400"/><rect x="448" y="141" width="1" height="10" fill="#d4d400"/><rect x="449" y="150" width="1" height="9" fill="#d4d400"/><rect x="450" y="158" width="1" height="10" fill="#d4d400"/><rect x="451" y="167" width="1" height="10" fill="#d4d400"/><rect x="452" y="176" width="1" height="10" fill="#d4d400"/><rect x="453" y="185" width="1" height="10" fill="#d4d400"/><rect x="453" y="190" width="1" height="1" fill="#c8c070"/><rect x="454" y="194" width="1" height="11" fill="#d4d400"/><rect x="455" y="204" width="1" height="10" fill="#d4d400"/><rect x="456" y="213" width="1" height="11" fill="#d4d400"/><rect x="457" y="223" width="1" height="11" fill="#d4d400"/><rect x="458" y="233" width="1" height="10" fill="#d4d400"/><rect x="458" y="240" width="1" height="1" fill="#c8c070"/><rect x="459" y="242" width="1" height="11" fill="#d4d400"/><rect x="460" y="252" width="1" height="10" fill="#d4d400"/><rect x="461" y="261" width="1" height="11" fill="#d4d400"/><rect x="462" y="271" width="1" height="10" fill="#d4d400"/><rect x="463" y="280" width="1" height="10" fill="#d4d400"/><rect x="464" y="289" width="1" height="10" fill="#d4d400"/><rect x="465" y="298" width="1" height="10" fill="#d4d400"/><rect x="466" y="307" width="1" height="9" fill="#d4d400"/><rect x="467" y="315" width="1" height="9" fill="#d4d400"/><rect x="468" y="323" width="1" height="9" fill="#d4d400"/><rect x="469" y="331" width="1" height="9" fill="#d4d400"/><rect x="470" y="339" width="1" height="8" fill="#d4d400"/><rect x="471" y="346" width="1" height="8" fill="#d4d400"/><rect x="472" y="353" width="1" height="8" fill="#d4d400"/><rect x="473" y="360" width="1" height="7" fill="#d4d400"/><rect x="473" y="360" width="1" height="1" fill="#c8c070"/><rect x="474" y="366" width="1" height="7" fill="#d4d400"/><rect x="475" y="372" width="1" height="7" fill="#d4d400"/><rect x="476" y="378" width="1" height="6" fill="#d4d400"/><rect x="477" y="383" width="1" height="6" fill="#d4d400"/><rect x="478" y="388" width="1" height="5" fill="#d4d400"/><rect x="479" y="392" width="1" height="5" fill="#d4d400"/><rect x="480" y="396" width="1" height="5" fill="#d4d400"/><rect x="481" y="400" width="1" height="5" fill="#d4d400"/><rect x="482" y="404" width="1" height="4" fill="#d4d400"/><rect x="483" y="407" width="1" height="4" fill="#d4d400"/><rect x="484" y="410" width="1" height="3" fill="#d4d400"/><rect x="485" y="412" width="1" height="3" fill="#d4d400"/><rect x="486" y="414" width="1" height="3" fill="#d4d400"/><rect x="487" y="416" width="1" height="2" fill="#d4d400"/><rect x="488" y="417" width="1" height="2" fill="#d4d400"/><rect x="489" y="418" width="1" height="1" fill="#d4d400"/><rect x="490" y="418" width="1" height="1" fill="#d4d400"/><rect x="491" y="418" width="1" height="1" fill="#d4d400"/><rect x="492" y="417" width="1" height="2" fill="#d4d400"/><rect x="493" y="416" width="1" height="2" fill="#d4d400"/><rect x="494" y="415" width="1" height="2" fill="#d4d400"/><rect x="495" y="413" width="1" height="3" fill="#d4d400"/><rect x="496" y="410" width="1" height="4" fill="#d4d400"/><rect x="497" y="407" width="1" height="4" fill="#d4d400"/><rect x="498" y="404" width="1" height="4" fill="#d4d400"/><rect x="499" y="400" width="1" height="5" fill="#d4d400"/><rect x="500" y="396" width="1" height="5" fill="#d4d400"/><rect x="501" y="391" width="1" height="6" fill="#d4d400"/><rect x="502" y="386" width="1" height="6" fill="#d4d400"/><rect x="503" y="381" width="1" height="6" fill="#d4d400"/><rect x="504" y="375" width="1" height="7" fill="#d4d400"/><rect x="505" y="368" width="1" height="8" fill="#d4d400"/><rect x="506" y="362" width="1" height="7" fill="#d4d400"/><rect x="507" y="354" width="1" height="9" fill="#d4d400"/><rect x="508" y="347" width="1" height="8" fill="#d4d400"/><rect x="509" y="339" width="1" height="9" fill="#d4d400"/><rect x="510" y="331" width="1" height="9" fill="#d4d400"/><rect x="511" y="323" width="1" height="9" fill="#d4d400"/><rect x="512" y="314" width="1" height="10" fill="#d4d400"/><rect x="513" y="305" width="1" height="10" fill="#d4d400"/><rect x="514" y="297" width="1" height="9" fill="#d4d400"/><rect x="515" y="287" width="1" height="11" fill="#d4d400"/><rect x="515" y="290" width="1" height="1" fill="#c8c070"/><rect x="516" y="278" width="1" height="10" fill="#d4d400"/><rect x="517" y="269" width="1" height="10" fill="#d4d400"/><rect x="518" y="260" width="1" height="10" fill="#d4d400"/><rect x="519" y="251" width="1" height="10" fill="#d4d400"/><rect x="519" y="260" width="1" height="1" fill="#c8c070"/><rect x="520" y="241" width="1" height="11" fill="#d4d400"/><rect x="520" y="250" width="1" height="1" fill="#c8c070"/><rect x="521" y="232" width="1" height="10" fill="#d4d400"/><rect x="521" y="240" width="1" height="1" fill="#c8c070"/><rect x="522" y="223" width="1" height="10" fill="#d4d400"/><rect x="522" y="230" width="1" height="1" fill="#c8c070"/><rect x="268" y="40" width="11" height="1" fill="#ff7030"/><rect x="269" y="41" width="9" height="1" fill="#ff7030"/><rect x="270" y="42" width="7" height="1" fill="#ff7030"/><rect x="271" y="43" width="5" height="1" fill="#ff7030"/><rect x="272" y="44" width="3" height="1" fill="#ff7030"/><rect x="273" y="45" width="1" height="1" fill="#ff7030"/></svg>
<div class="a" style="left:2px;top:235px;width:21px;height:14px;background:#ffff00"></div>
<svg class="a" style="left:0;top:0" width="40" height="260" shape-rendering="crispEdges" fill="#000"><rect x="11" y="239" width="1" height="9"/><rect x="9" y="240" width="2" height="1"/><rect x="16" y="242" width="3" height="1"/><rect x="19" y="240" width="1" height="5"/><rect x="20" y="241" width="2" height="3"/><rect x="22" y="242" width="1" height="1"/></svg>
<svg class="a" style="left:0;top:0" width="640" height="480" shape-rendering="crispEdges" fill="#ffff00"><rect x="514" y="233" width="8" height="1"/><rect x="510" y="233" width="1" height="1"/><rect x="511" y="232" width="1" height="3"/><rect x="512" y="231" width="1" height="5"/><rect x="513" y="230" width="1" height="7"/></svg>
<div class="t f" style="left:23.4px;top:440px;color:#ffff00;font-size:11px;transform:scale(0.8895,1);">Ch1</div>
<div class="t f" style="left:63.75px;top:440px;color:#ffff00;font-size:11px;transform:scale(0.9485,1);">280mV</div>
<div class="t f" style="left:106.7px;top:440px;color:#ffff00;font-size:11px;transform:scale(1.0714,1);">&Omega;</div>
<div class="t" style="left:322.95px;top:440px;color:#f0f0f0;font-size:11px;transform:scale(0.9523,1);">M 40.0ns 5.0GS/s</div>
<div class="t" style="left:432.5px;top:440px;color:#f0f0f0;font-size:11px;transform:scale(0.9878,1);">200ps/pt</div>
<div class="t" style="left:324.0px;top:452px;color:#f0f0f0;font-size:11px;transform:scale(0.8333,1);">A</div>
<div class="t" style="left:374.1px;top:452px;color:#f0f0f0;font-size:11px;transform:scale(0.9784,1);">50.4mV</div>
<div class="t f" style="left:335.5px;top:452px;color:#ffff00;font-size:11px;transform:scale(0.9211,1);">Ch1</div>
<svg class="a" style="left:0;top:0" width="640" height="480" shape-rendering="crispEdges" fill="#e0e0e0"><rect x="362" y="465" width="2" height="1"/><rect x="364" y="463" width="1" height="2"/><rect x="365" y="461" width="1" height="2"/><rect x="366" y="460" width="2" height="1"/></svg>
</body></html>
